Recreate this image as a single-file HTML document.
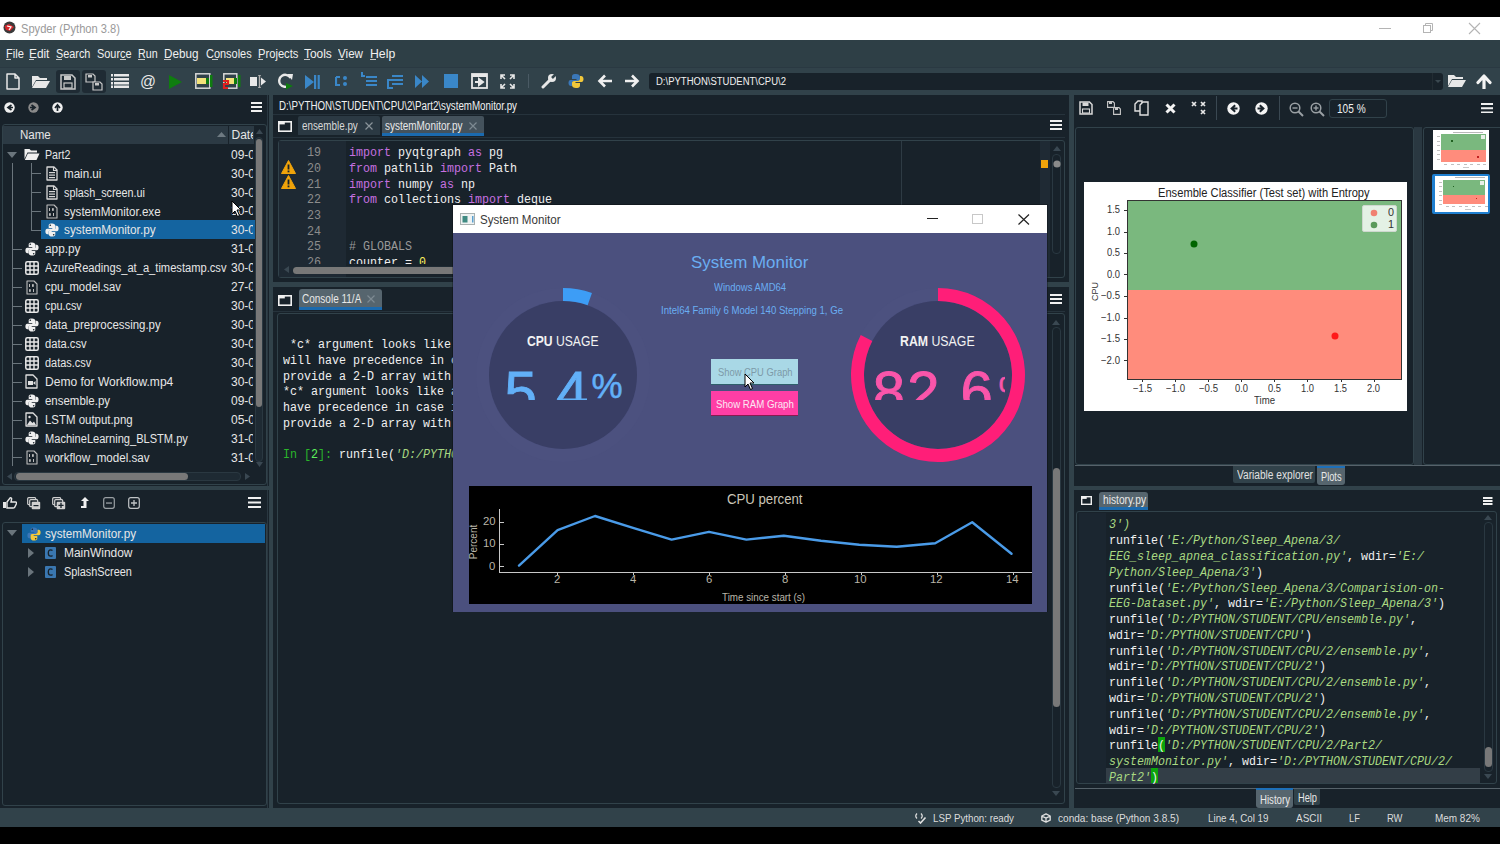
<!DOCTYPE html>
<html><head><meta charset="utf-8">
<style>
*{margin:0;padding:0;box-sizing:border-box}
html,body{width:1500px;height:844px;overflow:hidden;background:#000;font-family:"Liberation Sans",sans-serif;position:relative}
.a{position:absolute;display:block}
.t{position:absolute;white-space:pre;line-height:1}
.fr{border:1px solid #31424A;border-radius:3px}
</style></head><body>
<div class="a" style="left:0px;top:17px;width:1500px;height:23px;background:#fff;"></div>
<div class="a" style="left:0px;top:40px;width:1500px;height:28px;background:#2E3F46;"></div>
<div class="a" style="left:0px;top:67px;width:1500px;height:1px;background:#2A3942;"></div>
<div class="a" style="left:0px;top:68px;width:1500px;height:27px;background:#31424A;"></div>
<div class="a" style="left:0px;top:95px;width:1500px;height:713px;background:#18222A;"></div>
<div class="a" style="left:0px;top:808px;width:1500px;height:19px;background:#31424A;"></div>
<svg class="a" style="left:3px;top:21px;" width="13" height="13" viewBox="0 0 13 13"><circle cx="6.5" cy="6.5" r="6" fill="#3a3a3a"/><path d="M1.5 5 L6 3 L11 6 L7 10 L3 9 Z" fill="#d8262b"/><path d="M4 5 L8 6 L6 9" stroke="#fff" stroke-width="1.2" fill="none"/></svg>
<span class="t" style="left:21.00px;top:22.72px;font-size:12px;color:#9a9a9a;font-family:'Liberation Sans',sans-serif;transform:scaleX(0.9275);transform-origin:0 0;">Spyder (Python 3.8)</span>
<div class="a" style="left:1379px;top:28px;width:12px;height:1px;background:#b4b4b4;"></div>
<svg class="a" style="left:1422px;top:22px;" width="12" height="12" viewBox="0 0 12 12"><rect x="1.5" y="3.5" width="7" height="7" fill="none" stroke="#b4b4b4"/><path d="M3.5 3.5 V1.5 H10.5 V8.5 H8.5" fill="none" stroke="#b4b4b4"/></svg>
<svg class="a" style="left:1468px;top:22px;" width="13" height="13" viewBox="0 0 13 13"><path d="M1 1 L12 12 M12 1 L1 12" stroke="#b4b4b4" stroke-width="1.1"/></svg>
<span class="t" style="left:5.60px;top:48.22px;font-size:12px;color:#F0F0F0;font-family:'Liberation Sans',sans-serif;transform:scaleX(0.9254);transform-origin:0 0;">File</span>
<span class="t" style="left:29.40px;top:48.22px;font-size:12px;color:#F0F0F0;font-family:'Liberation Sans',sans-serif;transform:scaleX(0.9861);transform-origin:0 0;">Edit</span>
<span class="t" style="left:56.00px;top:48.22px;font-size:12px;color:#F0F0F0;font-family:'Liberation Sans',sans-serif;transform:scaleX(0.9045);transform-origin:0 0;">Search</span>
<span class="t" style="left:97.00px;top:48.22px;font-size:12px;color:#F0F0F0;font-family:'Liberation Sans',sans-serif;transform:scaleX(0.9098);transform-origin:0 0;">Source</span>
<span class="t" style="left:138.00px;top:48.22px;font-size:12px;color:#F0F0F0;font-family:'Liberation Sans',sans-serif;transform:scaleX(0.8903);transform-origin:0 0;">Run</span>
<span class="t" style="left:164.40px;top:48.22px;font-size:12px;color:#F0F0F0;font-family:'Liberation Sans',sans-serif;transform:scaleX(0.9724);transform-origin:0 0;">Debug</span>
<span class="t" style="left:205.80px;top:48.22px;font-size:12px;color:#F0F0F0;font-family:'Liberation Sans',sans-serif;transform:scaleX(0.9134);transform-origin:0 0;">Consoles</span>
<span class="t" style="left:257.60px;top:48.22px;font-size:12px;color:#F0F0F0;font-family:'Liberation Sans',sans-serif;transform:scaleX(0.9317);transform-origin:0 0;">Projects</span>
<span class="t" style="left:304.00px;top:48.22px;font-size:12px;color:#F0F0F0;font-family:'Liberation Sans',sans-serif;transform:scaleX(0.9923);transform-origin:0 0;">Tools</span>
<span class="t" style="left:338.00px;top:48.22px;font-size:12px;color:#F0F0F0;font-family:'Liberation Sans',sans-serif;transform:scaleX(0.9691);transform-origin:0 0;">View</span>
<span class="t" style="left:369.60px;top:48.22px;font-size:12px;color:#F0F0F0;font-family:'Liberation Sans',sans-serif;transform:scaleX(1.0208);transform-origin:0 0;">Help</span>
<div class="a" style="left:6px;top:59px;width:5px;height:1px;background:#c8c8c8;"></div>
<div class="a" style="left:29px;top:59px;width:5px;height:1px;background:#c8c8c8;"></div>
<div class="a" style="left:56px;top:59px;width:6px;height:1px;background:#c8c8c8;"></div>
<div class="a" style="left:120px;top:59px;width:6px;height:1px;background:#c8c8c8;"></div>
<div class="a" style="left:138px;top:59px;width:7px;height:1px;background:#c8c8c8;"></div>
<div class="a" style="left:164px;top:59px;width:7px;height:1px;background:#c8c8c8;"></div>
<div class="a" style="left:212px;top:59px;width:6px;height:1px;background:#c8c8c8;"></div>
<div class="a" style="left:258px;top:59px;width:5px;height:1px;background:#c8c8c8;"></div>
<div class="a" style="left:304px;top:59px;width:6px;height:1px;background:#c8c8c8;"></div>
<div class="a" style="left:338px;top:59px;width:6px;height:1px;background:#c8c8c8;"></div>
<div class="a" style="left:370px;top:59px;width:6px;height:1px;background:#c8c8c8;"></div>
<div class="a" style="left:56px;top:70px;width:24px;height:23px;background:#1f2b34;border-radius:3px"></div>
<div class="a" style="left:82px;top:70px;width:24px;height:23px;background:#1f2b34;border-radius:3px"></div>
<svg class="a" style="left:6px;top:73px;" width="14" height="17" viewBox="0 0 14 17"><path d="M1 1 H9 L13 5 V16 H1 Z M9 1 V5 H13" fill="none" stroke="#e8e8e8" stroke-width="1.5" stroke-linejoin="round"/></svg>
<svg class="a" style="left:31px;top:74px;" width="20" height="15" viewBox="0 0 20 15"><path d="M1 2 H7 L9 4 H16 V6 H5 L1 13 Z" fill="#e8e8e8"/><path d="M5 7 H19 L15 14 H1 Z" fill="#e8e8e8"/></svg>
<svg class="a" style="left:60px;top:74px;" width="16" height="16" viewBox="0 0 16 16"><path d="M1 1 H12 L15 4 V15 H1 Z" fill="none" stroke="#c8c8c8" stroke-width="1.5"/><rect x="4" y="2" width="7" height="4" fill="#c8c8c8"/><rect x="4" y="9" width="8" height="5" fill="none" stroke="#c8c8c8" stroke-width="1.2"/></svg>
<svg class="a" style="left:85px;top:73px;" width="19" height="19" viewBox="0 0 19 19"><path d="M1 1 H8 L10 3 V9 H1 Z" fill="none" stroke="#c8c8c8" stroke-width="1.2"/><rect x="3" y="2" width="4" height="2.5" fill="#c8c8c8"/><path d="M8 9 H15 L17 11 V17 H8 Z" fill="#1f2b34" stroke="#c8c8c8" stroke-width="1.2"/><rect x="10" y="10" width="4" height="2.5" fill="#c8c8c8"/></svg>
<svg class="a" style="left:111px;top:74px;" width="18" height="14" viewBox="0 0 18 14"><g fill="#e8e8e8"><rect x="0" y="0" width="2" height="2.5"/><rect x="3" y="0" width="15" height="2.5"/><rect x="0" y="4" width="2" height="2.5"/><rect x="3" y="4" width="15" height="2.5"/><rect x="0" y="8" width="2" height="2.5"/><rect x="3" y="8" width="15" height="2.5"/><rect x="0" y="11.5" width="2" height="2.5"/><rect x="3" y="11.5" width="15" height="2.5"/></g></svg>
<span class="t" style="left:139.50px;top:72.81px;font-size:17px;color:#e8e8e8;font-family:'Liberation Sans',sans-serif;transform:scaleX(0.9267);transform-origin:0 0;">@</span>
<svg class="a" style="left:169px;top:75px;" width="13" height="14" viewBox="0 0 13 14"><path d="M0 0 L13 7 L0 14 Z" fill="#0f7d0f"/></svg>
<svg class="a" style="left:195px;top:73px;" width="19" height="16" viewBox="0 0 19 16"><rect x="0.8" y="0.8" width="14" height="14.4" fill="none" stroke="#d8d8d8" stroke-width="1.5"/><rect x="2" y="5" width="9" height="6" fill="#f4e27a"/><rect x="11" y="5" width="3" height="6" fill="#0f7d0f"/><rect x="15" y="2" width="2.5" height="12" fill="#0f7d0f"/></svg>
<svg class="a" style="left:222px;top:73px;" width="19" height="17" viewBox="0 0 19 17"><rect x="1.8" y="0.8" width="13" height="14.4" fill="none" stroke="#d8d8d8" stroke-width="1.5"/><rect x="4" y="5" width="8" height="6" fill="#f4e27a"/><rect x="12" y="5" width="3" height="6" fill="#0f7d0f"/><rect x="16" y="2" width="2.5" height="12" fill="#0f7d0f"/><path d="M1 8 H6 V11 H2 V15 H6" fill="none" stroke="#e02020" stroke-width="2.2"/></svg>
<svg class="a" style="left:249px;top:75px;" width="18" height="13" viewBox="0 0 18 13"><rect x="1" y="2" width="7" height="9" fill="#e8e8e8"/><path d="M9 0 H12 M10.5 0 V13 M9 13 H12" stroke="#b0b0b0" stroke-width="1.4"/><path d="M12 2.5 L17 6.5 L12 10.5 Z" fill="#e8e8e8"/></svg>
<svg class="a" style="left:278px;top:73px;" width="16" height="17" viewBox="0 0 16 17"><path d="M12.5 5 A6 6 0 1 0 11 12.5" fill="none" stroke="#e8e8e8" stroke-width="2.4"/><path d="M9 1 L15 1 L14 7 Z" fill="#e8e8e8"/><path d="M8 10 L15 13 L8 16.5 Z" fill="#0f7d0f"/></svg>
<svg class="a" style="left:305px;top:75px;" width="15" height="14" viewBox="0 0 15 14"><path d="M0 0 L9 7 L0 14 Z" fill="#3a87c8"/><rect x="9" y="0" width="2.2" height="14" fill="#3a87c8"/><rect x="12.6" y="0" width="2.2" height="14" fill="#3a87c8"/></svg>
<svg class="a" style="left:335px;top:75px;" width="13" height="12" viewBox="0 0 13 12"><path d="M1 2 H5 M1 2 V10 H5" stroke="#3a87c8" stroke-width="2.2" fill="none"/><circle cx="10" cy="3" r="2" fill="#3a87c8"/><circle cx="10" cy="9" r="2" fill="#3a87c8"/></svg>
<svg class="a" style="left:361px;top:72px;" width="16" height="15" viewBox="0 0 16 15"><path d="M1 0 V4 H4" stroke="#3a87c8" stroke-width="2" fill="none"/><g fill="#3a87c8"><rect x="5" y="4" width="11" height="2"/><rect x="5" y="8" width="11" height="2"/><rect x="5" y="12" width="11" height="2"/></g></svg>
<svg class="a" style="left:387px;top:74px;" width="17" height="16" viewBox="0 0 17 16"><g fill="#3a87c8"><rect x="5" y="1" width="11" height="2"/><rect x="5" y="5" width="11" height="2"/><rect x="5" y="9" width="11" height="2"/></g><path d="M9 6 H1 V14 H6" stroke="#3a87c8" stroke-width="2" fill="none"/></svg>
<svg class="a" style="left:415px;top:75px;" width="16" height="13" viewBox="0 0 16 13"><path d="M0 0 L7 6.5 L0 13 Z M7 0 L14 6.5 L7 13 Z" fill="#3a87c8"/></svg>
<div class="a" style="left:444px;top:74px;width:14px;height:14px;background:#3a87c8;"></div>
<svg class="a" style="left:471px;top:73px;" width="17" height="16" viewBox="0 0 17 16"><rect x="1" y="1" width="15" height="14" fill="none" stroke="#e8e8e8" stroke-width="1.8"/><rect x="1" y="1" width="15" height="3" fill="#e8e8e8"/><path d="M4 9 H9 M8 6 L12 9 L8 12 Z" stroke="#e8e8e8" stroke-width="2" fill="#e8e8e8"/></svg>
<svg class="a" style="left:500px;top:74px;" width="15" height="15" viewBox="0 0 15 15"><g stroke="#e8e8e8" stroke-width="1.6" fill="none"><path d="M1 5 V1 H5 M1 1 L5 5"/><path d="M10 1 H14 V5 M14 1 L10 5"/><path d="M1 10 V14 H5 M1 14 L5 10"/><path d="M14 10 V14 H10 M14 14 L10 10"/></g></svg>
<div class="a" style="left:528px;top:74px;width:1px;height:14px;background:#4a5a64;"></div>
<svg class="a" style="left:541px;top:73px;" width="16" height="16" viewBox="0 0 16 16"><path d="M2 14 L9 7" stroke="#e8e8e8" stroke-width="3" stroke-linecap="round"/><circle cx="11" cy="5" r="4" fill="#e8e8e8"/><path d="M11 5 L15 1" stroke="#31424A" stroke-width="2.5"/></svg>
<svg class="a" style="left:568px;top:73px;" width="16" height="16" viewBox="0 0 16 16"><path d="M8 1 C4 1 4 2.5 4 4 V6 H8.5 V7 H2.5 C1 7 0.5 8.5 0.5 10 C0.5 12 1.5 13 3 13 H4 V10.5 C4 9 5 8 6.5 8 H10 C11.5 8 12 7 12 6 V4 C12 2 10.5 1 8 1 Z" fill="#3a77b8"/><path d="M8 15 C12 15 12 13.5 12 12 V10 H7.5 V9 H13.5 C15 9 15.5 7.5 15.5 6 C15.5 4 14.5 3 13 3 H12 V5.5 C12 7 11 8 9.5 8 H6 C4.5 8 4 9 4 10 V12 C4 14 5.5 15 8 15 Z" fill="#f2c83a"/></svg>
<svg class="a" style="left:597px;top:74px;" width="16" height="14" viewBox="0 0 16 14"><path d="M15 7 H3 M8 1.5 L2.5 7 L8 12.5" stroke="#f0f0f0" stroke-width="2.6" fill="none"/></svg>
<svg class="a" style="left:624px;top:74px;" width="16" height="14" viewBox="0 0 16 14"><path d="M1 7 H13 M8 1.5 L13.5 7 L8 12.5" stroke="#f0f0f0" stroke-width="2.6" fill="none"/></svg>
<div class="a" style="left:649px;top:73px;width:794px;height:17px;background:#18222A;border-radius:3px"></div>
<span class="t" style="left:656.00px;top:76.68px;font-size:10px;color:#F0F0F0;font-family:'Liberation Sans',sans-serif;transform:scaleX(0.9511);transform-origin:0 0;">D:\PYTHON\STUDENT\CPU\2</span>
<div class="a" style="left:1432px;top:73px;width:1px;height:17px;background:#222C33;"></div>
<svg class="a" style="left:1435px;top:80px;" width="6" height="3" viewBox="0 0 6 3"><path d="M0 0 L6 0 L3 3 Z" fill="#3a4850"/></svg>
<svg class="a" style="left:1447px;top:73px;" width="19" height="15" viewBox="0 0 19 15"><path d="M1 2 H7 L9 4 H16 V6 H5 L1 13 Z" fill="#e8e8e8"/><path d="M5 7 H19 L15 14 H1 Z" fill="#e8e8e8"/></svg>
<svg class="a" style="left:1476px;top:73px;" width="16" height="16" viewBox="0 0 16 16"><path d="M8 15.5 V4 M2 9.5 L8 3 L14 9.5" stroke="#f4f4f4" stroke-width="3.2" fill="none" stroke-linecap="round" stroke-linejoin="round"/></svg>
<svg class="a" style="left:4.0px;top:101.5px;" width="11" height="11" viewBox="0 0 11 11"><circle cx="5.5" cy="5.5" r="5.2" fill="#f0f0f0"/><path d="M7.5 3 L4 5.5 L7.5 8 M4 5.5 H9" stroke="#18222A" stroke-width="1.7" fill="none"/></svg>
<svg class="a" style="left:28.0px;top:101.5px;" width="11" height="11" viewBox="0 0 11 11"><circle cx="5.5" cy="5.5" r="5.2" fill="#8a8a8a"/><path d="M3.5 3 L7 5.5 L3.5 8 M2 5.5 H7" stroke="#18222A" stroke-width="1.7" fill="none"/></svg>
<svg class="a" style="left:52.0px;top:101.5px;" width="11" height="11" viewBox="0 0 11 11"><circle cx="5.5" cy="5.5" r="5.2" fill="#f0f0f0"/><path d="M3 6 L5.5 2.8 L8 6 M5.5 3 V9" stroke="#18222A" stroke-width="1.7" fill="none"/></svg>
<svg class="a" style="left:251px;top:102px;" width="11" height="10" viewBox="0 0 11 10"><g fill="#f0f0f0"><rect x="0" y="0" width="11" height="2"/><rect x="0" y="4.0" width="11" height="2"/><rect x="0" y="8" width="11" height="2"/></g></svg>
<div class="a fr" style="left:2px;top:124px;width:265px;height:361px"></div>
<div class="a" style="left:3px;top:126px;width:225px;height:18px;background:#2C3A44;"></div>
<div class="a" style="left:229px;top:126px;width:25px;height:18px;background:#2C3A44;"></div>
<span class="t" style="left:20.40px;top:129.22px;font-size:12px;color:#E6E6E6;font-family:'Liberation Sans',sans-serif;transform:scaleX(0.9620);transform-origin:0 0;">Name</span>
<svg class="a" style="left:217px;top:132px;" width="9" height="5" viewBox="0 0 9 5"><path d="M0 5 L4.5 0 L9 5 Z" fill="#6e7a82"/></svg>
<div class="a" style="left:229px;top:126px;width:24px;height:18px;overflow:hidden"><span class="t" style="left:2.5px;top:3.2px;font-size:12px;color:#E6E6E6">Date</span></div>
<svg class="a" style="left:256px;top:129px;" width="7" height="5" viewBox="0 0 7 5"><path d="M0 5 L3.5 0 L7 5 Z" fill="#3a4852"/></svg>
<div class="a" style="left:255px;top:137px;width:8px;height:325px;background:#1e2a33;border-radius:4px;border:1px solid #2a3841"></div>
<div class="a" style="left:256px;top:139px;width:6px;height:268px;background:#787878;border-radius:3px"></div>
<svg class="a" style="left:256px;top:462px;" width="7" height="5" viewBox="0 0 7 5"><path d="M0 0 L3.5 5 L7 0 Z" fill="#3a4852"/></svg>
<div class="a" style="left:41px;top:220px;width:214px;height:19px;background:#1464A0;"></div>
<div class="a" style="left:12px;top:163px;width:1px;height:303px;background:#6a757c;"></div>
<div class="a" style="left:31px;top:163px;width:1px;height:68px;background:#6a757c;"></div>
<svg class="a" style="left:24px;top:148.0px;" width="16" height="13" viewBox="0 0 16 13"><path d="M0.5 1 H5.5 L7 2.5 H13 V4.5 H3.5 L0.5 11 Z" fill="#f0f0f0"/><path d="M3.8 5.5 H15.5 L12.5 12 H0.8 Z" fill="#f0f0f0"/></svg>
<span class="t" style="left:44.50px;top:148.72px;font-size:12px;color:#E6E6E6;font-family:'Liberation Sans',sans-serif;transform:scaleX(0.8854);transform-origin:0 0;">Part2</span>
<div class="a" style="left:229px;top:146.5px;width:24px;height:16px;overflow:hidden"><span class="t" style="left:2px;top:2.2px;font-size:12px;color:#E6E6E6">09-0</span></div>
<div class="a" style="left:31px;top:173px;width:10px;height:1px;background:#6a757c;"></div>
<svg class="a" style="left:46px;top:165.93px;" width="12" height="15" viewBox="0 0 12 15"><path d="M1 1 H8 L11 4 V14 H1 Z" fill="none" stroke="#d8d8d8" stroke-width="1.3" stroke-linejoin="round"/><path d="M7.5 1 V4.5 H11" fill="none" stroke="#d8d8d8" stroke-width="1.1"/><g fill="#d8d8d8"><rect x="3" y="6" width="6" height="1.2"/><rect x="3" y="8.5" width="6" height="1.2"/><rect x="3" y="11" width="6" height="1.2"/></g></svg>
<span class="t" style="left:64.00px;top:167.65px;font-size:12px;color:#E6E6E6;font-family:'Liberation Sans',sans-serif;transform:scaleX(0.9667);transform-origin:0 0;">main.ui</span>
<div class="a" style="left:229px;top:165.4px;width:24px;height:16px;overflow:hidden"><span class="t" style="left:2px;top:2.2px;font-size:12px;color:#E6E6E6">30-0</span></div>
<div class="a" style="left:31px;top:192px;width:10px;height:1px;background:#6a757c;"></div>
<svg class="a" style="left:46px;top:184.86px;" width="12" height="15" viewBox="0 0 12 15"><path d="M1 1 H8 L11 4 V14 H1 Z" fill="none" stroke="#d8d8d8" stroke-width="1.3" stroke-linejoin="round"/><path d="M7.5 1 V4.5 H11" fill="none" stroke="#d8d8d8" stroke-width="1.1"/><g fill="#d8d8d8"><rect x="3" y="6" width="6" height="1.2"/><rect x="3" y="8.5" width="6" height="1.2"/><rect x="3" y="11" width="6" height="1.2"/></g></svg>
<span class="t" style="left:64.00px;top:186.58px;font-size:12px;color:#E6E6E6;font-family:'Liberation Sans',sans-serif;transform:scaleX(0.8994);transform-origin:0 0;">splash_screen.ui</span>
<div class="a" style="left:229px;top:184.4px;width:24px;height:16px;overflow:hidden"><span class="t" style="left:2px;top:2.2px;font-size:12px;color:#E6E6E6">30-0</span></div>
<div class="a" style="left:31px;top:211px;width:10px;height:1px;background:#6a757c;"></div>
<svg class="a" style="left:46px;top:203.79px;" width="12" height="15" viewBox="0 0 12 15"><path d="M1 1 H8 L11 4 V14 H1 Z" fill="none" stroke="#bdbdbd" stroke-width="1.1" stroke-linejoin="round"/><g fill="#bdbdbd"><rect x="3" y="4" width="1" height="3"/><rect x="6" y="4" width="1.8" height="3" rx="0.8"/><rect x="3" y="9" width="1.8" height="3" rx="0.8"/><rect x="7" y="9" width="1" height="3"/></g></svg>
<span class="t" style="left:64.00px;top:205.51px;font-size:12px;color:#E6E6E6;font-family:'Liberation Sans',sans-serif;transform:scaleX(0.9655);transform-origin:0 0;">systemMonitor.exe</span>
<div class="a" style="left:229px;top:203.3px;width:24px;height:16px;overflow:hidden"><span class="t" style="left:2px;top:2.2px;font-size:12px;color:#E6E6E6">30-0</span></div>
<div class="a" style="left:31px;top:230px;width:10px;height:1px;background:#6a757c;"></div>
<svg class="a" style="left:45px;top:223.22px;" width="14" height="14" viewBox="0 0 14 14"><path d="M7 0.5 C3.5 0.5 3.7 2 3.7 3.3 V5 H7.3 V5.8 H2.2 C1 5.8 0.4 7 0.4 8.6 C0.4 10.4 1.2 11.2 2.3 11.2 H3.6 V9.3 C3.6 8 4.5 7.1 5.7 7.1 H9 C10.1 7.1 10.4 6.3 10.4 5.4 V3.1 C10.4 1.6 9.2 0.5 7 0.5 Z" fill="#f0f0f0"/><path d="M7 13.5 C10.5 13.5 10.3 12 10.3 10.7 V9 H6.7 V8.2 H11.8 C13 8.2 13.6 7 13.6 5.4 C13.6 3.6 12.8 2.8 11.7 2.8 H10.6 V4.7 C10.6 6 9.7 6.9 8.5 6.9 H5 C3.9 6.9 3.6 7.7 3.6 8.6 V10.9 C3.6 12.4 4.8 13.5 7 13.5 Z" fill="#f0f0f0"/><circle cx="5.3" cy="2.3" r="0.8" fill="#18222A"/><circle cx="8.7" cy="11.7" r="0.8" fill="#18222A"/></svg>
<span class="t" style="left:64.00px;top:224.44px;font-size:12px;color:#E6E6E6;font-family:'Liberation Sans',sans-serif;transform:scaleX(0.9810);transform-origin:0 0;">systemMonitor.py</span>
<div class="a" style="left:229px;top:222.2px;width:24px;height:16px;overflow:hidden"><span class="t" style="left:2px;top:2.2px;font-size:12px;color:#E6E6E6">30-0</span></div>
<div class="a" style="left:12px;top:249px;width:10px;height:1px;background:#6a757c;"></div>
<svg class="a" style="left:25px;top:242.15px;" width="14" height="14" viewBox="0 0 14 14"><path d="M7 0.5 C3.5 0.5 3.7 2 3.7 3.3 V5 H7.3 V5.8 H2.2 C1 5.8 0.4 7 0.4 8.6 C0.4 10.4 1.2 11.2 2.3 11.2 H3.6 V9.3 C3.6 8 4.5 7.1 5.7 7.1 H9 C10.1 7.1 10.4 6.3 10.4 5.4 V3.1 C10.4 1.6 9.2 0.5 7 0.5 Z" fill="#f0f0f0"/><path d="M7 13.5 C10.5 13.5 10.3 12 10.3 10.7 V9 H6.7 V8.2 H11.8 C13 8.2 13.6 7 13.6 5.4 C13.6 3.6 12.8 2.8 11.7 2.8 H10.6 V4.7 C10.6 6 9.7 6.9 8.5 6.9 H5 C3.9 6.9 3.6 7.7 3.6 8.6 V10.9 C3.6 12.4 4.8 13.5 7 13.5 Z" fill="#f0f0f0"/><circle cx="5.3" cy="2.3" r="0.8" fill="#18222A"/><circle cx="8.7" cy="11.7" r="0.8" fill="#18222A"/></svg>
<span class="t" style="left:44.50px;top:243.37px;font-size:12px;color:#E6E6E6;font-family:'Liberation Sans',sans-serif;transform:scaleX(0.9853);transform-origin:0 0;">app.py</span>
<div class="a" style="left:229px;top:241.2px;width:24px;height:16px;overflow:hidden"><span class="t" style="left:2px;top:2.2px;font-size:12px;color:#E6E6E6">31-0</span></div>
<div class="a" style="left:12px;top:268px;width:10px;height:1px;background:#6a757c;"></div>
<svg class="a" style="left:25px;top:261.08px;" width="14" height="14" viewBox="0 0 14 14"><rect x="0.8" y="0.8" width="12.4" height="12.4" rx="1.5" fill="none" stroke="#e8e8e8" stroke-width="1.5"/><path d="M5 1 V13 M9 1 V13 M1 5 H13 M1 9 H13" stroke="#e8e8e8" stroke-width="1.4"/></svg>
<span class="t" style="left:44.50px;top:262.30px;font-size:12px;color:#E6E6E6;font-family:'Liberation Sans',sans-serif;transform:scaleX(0.9287);transform-origin:0 0;">AzureReadings_at_a_timestamp.csv</span>
<div class="a" style="left:229px;top:260.1px;width:24px;height:16px;overflow:hidden"><span class="t" style="left:2px;top:2.2px;font-size:12px;color:#E6E6E6">30-0</span></div>
<div class="a" style="left:12px;top:287px;width:10px;height:1px;background:#6a757c;"></div>
<svg class="a" style="left:26px;top:279.51px;" width="12" height="15" viewBox="0 0 12 15"><path d="M1 1 H8 L11 4 V14 H1 Z" fill="none" stroke="#bdbdbd" stroke-width="1.1" stroke-linejoin="round"/><g fill="#bdbdbd"><rect x="3" y="4" width="1" height="3"/><rect x="6" y="4" width="1.8" height="3" rx="0.8"/><rect x="3" y="9" width="1.8" height="3" rx="0.8"/><rect x="7" y="9" width="1" height="3"/></g></svg>
<span class="t" style="left:44.50px;top:281.23px;font-size:12px;color:#E6E6E6;font-family:'Liberation Sans',sans-serif;transform:scaleX(0.9403);transform-origin:0 0;">cpu_model.sav</span>
<div class="a" style="left:229px;top:279.0px;width:24px;height:16px;overflow:hidden"><span class="t" style="left:2px;top:2.2px;font-size:12px;color:#E6E6E6">27-0</span></div>
<div class="a" style="left:12px;top:306px;width:10px;height:1px;background:#6a757c;"></div>
<svg class="a" style="left:25px;top:298.94px;" width="14" height="14" viewBox="0 0 14 14"><rect x="0.8" y="0.8" width="12.4" height="12.4" rx="1.5" fill="none" stroke="#e8e8e8" stroke-width="1.5"/><path d="M5 1 V13 M9 1 V13 M1 5 H13 M1 9 H13" stroke="#e8e8e8" stroke-width="1.4"/></svg>
<span class="t" style="left:44.50px;top:300.16px;font-size:12px;color:#E6E6E6;font-family:'Liberation Sans',sans-serif;transform:scaleX(0.9045);transform-origin:0 0;">cpu.csv</span>
<div class="a" style="left:229px;top:297.9px;width:24px;height:16px;overflow:hidden"><span class="t" style="left:2px;top:2.2px;font-size:12px;color:#E6E6E6">30-0</span></div>
<div class="a" style="left:12px;top:325px;width:10px;height:1px;background:#6a757c;"></div>
<svg class="a" style="left:25px;top:317.87px;" width="14" height="14" viewBox="0 0 14 14"><path d="M7 0.5 C3.5 0.5 3.7 2 3.7 3.3 V5 H7.3 V5.8 H2.2 C1 5.8 0.4 7 0.4 8.6 C0.4 10.4 1.2 11.2 2.3 11.2 H3.6 V9.3 C3.6 8 4.5 7.1 5.7 7.1 H9 C10.1 7.1 10.4 6.3 10.4 5.4 V3.1 C10.4 1.6 9.2 0.5 7 0.5 Z" fill="#f0f0f0"/><path d="M7 13.5 C10.5 13.5 10.3 12 10.3 10.7 V9 H6.7 V8.2 H11.8 C13 8.2 13.6 7 13.6 5.4 C13.6 3.6 12.8 2.8 11.7 2.8 H10.6 V4.7 C10.6 6 9.7 6.9 8.5 6.9 H5 C3.9 6.9 3.6 7.7 3.6 8.6 V10.9 C3.6 12.4 4.8 13.5 7 13.5 Z" fill="#f0f0f0"/><circle cx="5.3" cy="2.3" r="0.8" fill="#18222A"/><circle cx="8.7" cy="11.7" r="0.8" fill="#18222A"/></svg>
<span class="t" style="left:44.50px;top:319.09px;font-size:12px;color:#E6E6E6;font-family:'Liberation Sans',sans-serif;transform:scaleX(0.9529);transform-origin:0 0;">data_preprocessing.py</span>
<div class="a" style="left:229px;top:316.9px;width:24px;height:16px;overflow:hidden"><span class="t" style="left:2px;top:2.2px;font-size:12px;color:#E6E6E6">30-0</span></div>
<div class="a" style="left:12px;top:344px;width:10px;height:1px;background:#6a757c;"></div>
<svg class="a" style="left:25px;top:336.8px;" width="14" height="14" viewBox="0 0 14 14"><rect x="0.8" y="0.8" width="12.4" height="12.4" rx="1.5" fill="none" stroke="#e8e8e8" stroke-width="1.5"/><path d="M5 1 V13 M9 1 V13 M1 5 H13 M1 9 H13" stroke="#e8e8e8" stroke-width="1.4"/></svg>
<span class="t" style="left:44.50px;top:338.02px;font-size:12px;color:#E6E6E6;font-family:'Liberation Sans',sans-serif;transform:scaleX(0.9306);transform-origin:0 0;">data.csv</span>
<div class="a" style="left:229px;top:335.8px;width:24px;height:16px;overflow:hidden"><span class="t" style="left:2px;top:2.2px;font-size:12px;color:#E6E6E6">30-0</span></div>
<div class="a" style="left:12px;top:363px;width:10px;height:1px;background:#6a757c;"></div>
<svg class="a" style="left:25px;top:355.73px;" width="14" height="14" viewBox="0 0 14 14"><rect x="0.8" y="0.8" width="12.4" height="12.4" rx="1.5" fill="none" stroke="#e8e8e8" stroke-width="1.5"/><path d="M5 1 V13 M9 1 V13 M1 5 H13 M1 9 H13" stroke="#e8e8e8" stroke-width="1.4"/></svg>
<span class="t" style="left:44.50px;top:356.95px;font-size:12px;color:#E6E6E6;font-family:'Liberation Sans',sans-serif;transform:scaleX(0.9092);transform-origin:0 0;">datas.csv</span>
<div class="a" style="left:229px;top:354.7px;width:24px;height:16px;overflow:hidden"><span class="t" style="left:2px;top:2.2px;font-size:12px;color:#E6E6E6">30-0</span></div>
<div class="a" style="left:12px;top:382px;width:10px;height:1px;background:#6a757c;"></div>
<svg class="a" style="left:25px;top:374.15999999999997px;" width="13" height="15" viewBox="0 0 13 15"><path d="M1 1 H8 L12 5 V14 H1 Z" fill="none" stroke="#e0e0e0" stroke-width="1.3" stroke-linejoin="round"/><rect x="3" y="7" width="5" height="4" fill="#e0e0e0"/><path d="M8 9 L10.5 7 V11 Z" fill="#e0e0e0"/></svg>
<span class="t" style="left:44.50px;top:375.88px;font-size:12px;color:#E6E6E6;font-family:'Liberation Sans',sans-serif;transform:scaleX(1.0037);transform-origin:0 0;">Demo for Workflow.mp4</span>
<div class="a" style="left:229px;top:373.7px;width:24px;height:16px;overflow:hidden"><span class="t" style="left:2px;top:2.2px;font-size:12px;color:#E6E6E6">30-0</span></div>
<div class="a" style="left:12px;top:401px;width:10px;height:1px;background:#6a757c;"></div>
<svg class="a" style="left:25px;top:393.59000000000003px;" width="14" height="14" viewBox="0 0 14 14"><path d="M7 0.5 C3.5 0.5 3.7 2 3.7 3.3 V5 H7.3 V5.8 H2.2 C1 5.8 0.4 7 0.4 8.6 C0.4 10.4 1.2 11.2 2.3 11.2 H3.6 V9.3 C3.6 8 4.5 7.1 5.7 7.1 H9 C10.1 7.1 10.4 6.3 10.4 5.4 V3.1 C10.4 1.6 9.2 0.5 7 0.5 Z" fill="#f0f0f0"/><path d="M7 13.5 C10.5 13.5 10.3 12 10.3 10.7 V9 H6.7 V8.2 H11.8 C13 8.2 13.6 7 13.6 5.4 C13.6 3.6 12.8 2.8 11.7 2.8 H10.6 V4.7 C10.6 6 9.7 6.9 8.5 6.9 H5 C3.9 6.9 3.6 7.7 3.6 8.6 V10.9 C3.6 12.4 4.8 13.5 7 13.5 Z" fill="#f0f0f0"/><circle cx="5.3" cy="2.3" r="0.8" fill="#18222A"/><circle cx="8.7" cy="11.7" r="0.8" fill="#18222A"/></svg>
<span class="t" style="left:44.50px;top:394.81px;font-size:12px;color:#E6E6E6;font-family:'Liberation Sans',sans-serif;transform:scaleX(0.9552);transform-origin:0 0;">ensemble.py</span>
<div class="a" style="left:229px;top:392.6px;width:24px;height:16px;overflow:hidden"><span class="t" style="left:2px;top:2.2px;font-size:12px;color:#E6E6E6">09-0</span></div>
<div class="a" style="left:12px;top:420px;width:10px;height:1px;background:#6a757c;"></div>
<svg class="a" style="left:25px;top:412.02px;" width="13" height="15" viewBox="0 0 13 15"><path d="M1 1 H8 L12 5 V14 H1 Z" fill="none" stroke="#e0e0e0" stroke-width="1.3" stroke-linejoin="round"/><path d="M2 13 L5 8.5 L7.5 11 L9 9.5 L11 13 Z" fill="#e0e0e0"/><circle cx="4.5" cy="5" r="1.2" fill="#e0e0e0"/></svg>
<span class="t" style="left:44.50px;top:413.74px;font-size:12px;color:#E6E6E6;font-family:'Liberation Sans',sans-serif;transform:scaleX(0.9526);transform-origin:0 0;">LSTM output.png</span>
<div class="a" style="left:229px;top:411.5px;width:24px;height:16px;overflow:hidden"><span class="t" style="left:2px;top:2.2px;font-size:12px;color:#E6E6E6">05-0</span></div>
<div class="a" style="left:12px;top:438px;width:10px;height:1px;background:#6a757c;"></div>
<svg class="a" style="left:25px;top:431.45px;" width="14" height="14" viewBox="0 0 14 14"><path d="M7 0.5 C3.5 0.5 3.7 2 3.7 3.3 V5 H7.3 V5.8 H2.2 C1 5.8 0.4 7 0.4 8.6 C0.4 10.4 1.2 11.2 2.3 11.2 H3.6 V9.3 C3.6 8 4.5 7.1 5.7 7.1 H9 C10.1 7.1 10.4 6.3 10.4 5.4 V3.1 C10.4 1.6 9.2 0.5 7 0.5 Z" fill="#f0f0f0"/><path d="M7 13.5 C10.5 13.5 10.3 12 10.3 10.7 V9 H6.7 V8.2 H11.8 C13 8.2 13.6 7 13.6 5.4 C13.6 3.6 12.8 2.8 11.7 2.8 H10.6 V4.7 C10.6 6 9.7 6.9 8.5 6.9 H5 C3.9 6.9 3.6 7.7 3.6 8.6 V10.9 C3.6 12.4 4.8 13.5 7 13.5 Z" fill="#f0f0f0"/><circle cx="5.3" cy="2.3" r="0.8" fill="#18222A"/><circle cx="8.7" cy="11.7" r="0.8" fill="#18222A"/></svg>
<span class="t" style="left:44.50px;top:432.67px;font-size:12px;color:#E6E6E6;font-family:'Liberation Sans',sans-serif;transform:scaleX(0.9233);transform-origin:0 0;">MachineLearning_BLSTM.py</span>
<div class="a" style="left:229px;top:430.4px;width:24px;height:16px;overflow:hidden"><span class="t" style="left:2px;top:2.2px;font-size:12px;color:#E6E6E6">31-0</span></div>
<div class="a" style="left:12px;top:457px;width:10px;height:1px;background:#6a757c;"></div>
<svg class="a" style="left:26px;top:449.88px;" width="12" height="15" viewBox="0 0 12 15"><path d="M1 1 H8 L11 4 V14 H1 Z" fill="none" stroke="#bdbdbd" stroke-width="1.1" stroke-linejoin="round"/><g fill="#bdbdbd"><rect x="3" y="4" width="1" height="3"/><rect x="6" y="4" width="1.8" height="3" rx="0.8"/><rect x="3" y="9" width="1.8" height="3" rx="0.8"/><rect x="7" y="9" width="1" height="3"/></g></svg>
<span class="t" style="left:44.50px;top:451.60px;font-size:12px;color:#E6E6E6;font-family:'Liberation Sans',sans-serif;transform:scaleX(0.9681);transform-origin:0 0;">workflow_model.sav</span>
<div class="a" style="left:229px;top:449.4px;width:24px;height:16px;overflow:hidden"><span class="t" style="left:2px;top:2.2px;font-size:12px;color:#E6E6E6">31-0</span></div>
<svg class="a" style="left:7px;top:152px;" width="10" height="6" viewBox="0 0 10 6"><path d="M0 0 L10 0 L5 6 Z" fill="#6a757c"/></svg>
<div class="a" style="left:14px;top:472px;width:227px;height:9px;background:#1e2a33;border-radius:4px;border:1px solid #2a3841"></div>
<div class="a" style="left:16px;top:473px;width:172px;height:7px;background:#787878;border-radius:3.5px"></div>
<svg class="a" style="left:7px;top:473px;" width="5" height="7" viewBox="0 0 5 7"><path d="M5 0 L0 3.5 L5 7 Z" fill="#3a4852"/></svg>
<svg class="a" style="left:245px;top:473px;" width="5" height="7" viewBox="0 0 5 7"><path d="M0 0 L5 3.5 L0 7 Z" fill="#3a4852"/></svg>
<svg class="a" style="left:2px;top:497px;" width="15" height="12" viewBox="0 0 15 12"><path d="M1 5 H4 V11 H1 Z" fill="#e8e8e8"/><path d="M5 5 L8 1 C9 0.5 10 1 9.5 2.5 L9 5 H13.5 C14.5 5 14.8 6 14.3 7 L12.5 10.5 C12 11 11.5 11 11 11 H5 Z" fill="none" stroke="#e8e8e8" stroke-width="1.4"/></svg>
<svg class="a" style="left:27px;top:497px;" width="14" height="13" viewBox="0 0 14 13"><rect x="0.7" y="0.7" width="8" height="7" rx="1" fill="none" stroke="#d0d0d0" stroke-width="1.2"/><rect x="2.7" y="2.7" width="8" height="7" rx="1" fill="#18222A" stroke="#d0d0d0" stroke-width="1.2"/><rect x="4.7" y="4.7" width="8.5" height="7.5" rx="1" fill="#d0d0d0"/><rect x="6.5" y="8" width="5" height="1.2" fill="#18222A"/></svg>
<svg class="a" style="left:52px;top:497px;" width="14" height="13" viewBox="0 0 14 13"><rect x="0.7" y="0.7" width="8" height="7" rx="1" fill="none" stroke="#d0d0d0" stroke-width="1.2"/><rect x="2.7" y="2.7" width="8" height="7" rx="1" fill="#18222A" stroke="#d0d0d0" stroke-width="1.2"/><rect x="4.7" y="4.7" width="8.5" height="7.5" rx="1" fill="#d0d0d0"/><path d="M9 5.8 V11 M6.4 8.4 H11.6" stroke="#18222A" stroke-width="1.3"/></svg>
<svg class="a" style="left:80px;top:496px;" width="10" height="13" viewBox="0 0 10 13"><path d="M5 1 L9 5 H6.5 V12 H1 V10 H3.5 V5 H1 Z" fill="#f0f0f0"/></svg>
<svg class="a" style="left:103px;top:497px;" width="12" height="12" viewBox="0 0 12 12"><rect x="0.7" y="0.7" width="10.6" height="10.6" rx="2" fill="none" stroke="#9aa0a4" stroke-width="1.2"/><rect x="3" y="5.4" width="6" height="1.3" fill="#9aa0a4"/></svg>
<svg class="a" style="left:128px;top:497px;" width="12" height="12" viewBox="0 0 12 12"><rect x="0.7" y="0.7" width="10.6" height="10.6" rx="2" fill="none" stroke="#c0c4c6" stroke-width="1.2"/><path d="M3 6 H9 M6 3 V9" stroke="#c0c4c6" stroke-width="1.3"/></svg>
<svg class="a" style="left:248px;top:497px;" width="13" height="11" viewBox="0 0 13 11"><g fill="#f0f0f0"><rect x="0" y="0" width="13" height="2"/><rect x="0" y="4.5" width="13" height="2"/><rect x="0" y="9" width="13" height="2"/></g></svg>
<div class="a fr" style="left:2px;top:522px;width:265px;height:284px"></div>
<div class="a" style="left:22px;top:524px;width:243px;height:19px;background:#1464A0;"></div>
<svg class="a" style="left:7px;top:530px;" width="10" height="6" viewBox="0 0 10 6"><path d="M0 0 L10 0 L5 6 Z" fill="#6a757c"/></svg>
<svg class="a" style="left:27px;top:526.5px;" width="14" height="14" viewBox="0 0 14 14"><path d="M7 0.5 C3.5 0.5 3.7 2 3.7 3.3 V5 H7.3 V5.8 H2.2 C1 5.8 0.4 7 0.4 8.6 C0.4 10.4 1.2 11.2 2.3 11.2 H3.6 V9.3 C3.6 8 4.5 7.1 5.7 7.1 H9 C10.1 7.1 10.4 6.3 10.4 5.4 V3.1 C10.4 1.6 9.2 0.5 7 0.5 Z" fill="#3a77b8"/><path d="M7 13.5 C10.5 13.5 10.3 12 10.3 10.7 V9 H6.7 V8.2 H11.8 C13 8.2 13.6 7 13.6 5.4 C13.6 3.6 12.8 2.8 11.7 2.8 H10.6 V4.7 C10.6 6 9.7 6.9 8.5 6.9 H5 C3.9 6.9 3.6 7.7 3.6 8.6 V10.9 C3.6 12.4 4.8 13.5 7 13.5 Z" fill="#f2c83a"/><circle cx="5.3" cy="2.3" r="0.8" fill="#18222A"/><circle cx="8.7" cy="11.7" r="0.8" fill="#18222A"/></svg>
<span class="t" style="left:44.80px;top:527.72px;font-size:12px;color:#E6E6E6;font-family:'Liberation Sans',sans-serif;transform:scaleX(0.9756);transform-origin:0 0;">systemMonitor.py</span>
<svg class="a" style="left:28px;top:547.5px;" width="6" height="10" viewBox="0 0 6 10"><path d="M0 0 L6 5 L0 10 Z" fill="#6a757c"/></svg>
<svg class="a" style="left:45px;top:546.5px;" width="11" height="12" viewBox="0 0 11 12"><rect width="11" height="12" rx="1" fill="#3a77b0"/><path d="M7.5 3.5 C7 3 6.5 2.8 5.7 2.8 C4.2 2.8 3.3 4 3.3 6 C3.3 8 4.2 9.2 5.7 9.2 C6.5 9.2 7 9 7.5 8.5" stroke="#18222A" stroke-width="1.3" fill="none"/></svg>
<span class="t" style="left:64.40px;top:546.72px;font-size:12px;color:#E6E6E6;font-family:'Liberation Sans',sans-serif;transform:scaleX(0.9970);transform-origin:0 0;">MainWindow</span>
<svg class="a" style="left:28px;top:566.5px;" width="6" height="10" viewBox="0 0 6 10"><path d="M0 0 L6 5 L0 10 Z" fill="#6a757c"/></svg>
<svg class="a" style="left:45px;top:565.5px;" width="11" height="12" viewBox="0 0 11 12"><rect width="11" height="12" rx="1" fill="#3a77b0"/><path d="M7.5 3.5 C7 3 6.5 2.8 5.7 2.8 C4.2 2.8 3.3 4 3.3 6 C3.3 8 4.2 9.2 5.7 9.2 C6.5 9.2 7 9 7.5 8.5" stroke="#18222A" stroke-width="1.3" fill="none"/></svg>
<span class="t" style="left:64.40px;top:565.72px;font-size:12px;color:#E6E6E6;font-family:'Liberation Sans',sans-serif;transform:scaleX(0.9074);transform-origin:0 0;">SplashScreen</span>
<div class="a" style="left:267px;top:95px;width:1px;height:713px;background:#2A3841;"></div>
<div class="a" style="left:269px;top:95px;width:4px;height:713px;background:#31424A;"></div>
<div class="a" style="left:1069px;top:95px;width:5px;height:713px;background:#31424A;"></div>
<div class="a" style="left:0px;top:486px;width:269px;height:4px;background:#31424A;"></div>
<div class="a" style="left:273px;top:282px;width:796px;height:5px;background:#31424A;"></div>
<div class="a" style="left:1074px;top:486px;width:426px;height:4px;background:#31424A;"></div>
<span class="t" style="left:279.00px;top:100.22px;font-size:12px;color:#F0F0F0;font-family:'Liberation Sans',sans-serif;transform:scaleX(0.8130);transform-origin:0 0;">D:\PYTHON\STUDENT\CPU\2\Part2\systemMonitor.py</span>
<svg class="a" style="left:278px;top:121px;" width="14" height="11" viewBox="0 0 14 11"><rect x="0.8" y="0.8" width="12.4" height="9.4" fill="none" stroke="#f0f0f0" stroke-width="1.6"/><rect x="0.8" y="0.8" width="6" height="2.6" fill="#f0f0f0"/></svg>
<div class="a" style="left:273px;top:114px;width:792px;height:1px;background:#26333C;"></div>
<div class="a" style="left:273px;top:137px;width:792px;height:1px;background:#26333C;"></div>
<div class="a" style="left:298px;top:116px;width:82px;height:19px;background:#2B3943;border-radius:2px 2px 0 0"></div>
<span class="t" style="left:301.80px;top:120.22px;font-size:12px;color:#D8D8D8;font-family:'Liberation Sans',sans-serif;transform:scaleX(0.8200);transform-origin:0 0;">ensemble.py</span>
<svg class="a" style="left:364.5px;top:122px;" width="8" height="8" viewBox="0 0 8 8"><path d="M0.5 0.5 L7.5 7.5 M7.5 0.5 L0.5 7.5" stroke="#8a949a" stroke-width="1.2"/></svg>
<div class="a" style="left:382px;top:116px;width:102px;height:19px;background:#44525C;border-radius:2px 2px 0 0"></div>
<div class="a" style="left:382px;top:133px;width:102px;height:2.5px;background:#1B6AAE;"></div>
<span class="t" style="left:384.80px;top:119.72px;font-size:12px;color:#E8E8E8;font-family:'Liberation Sans',sans-serif;transform:scaleX(0.8300);transform-origin:0 0;">systemMonitor.py</span>
<svg class="a" style="left:469px;top:121.5px;" width="8" height="8" viewBox="0 0 8 8"><path d="M0.5 0.5 L7.5 7.5 M7.5 0.5 L0.5 7.5" stroke="#7d8a92" stroke-width="1.2"/></svg>
<svg class="a" style="left:1050px;top:120px;" width="12" height="10" viewBox="0 0 12 10"><g fill="#f0f0f0"><rect x="0" y="0" width="12" height="2"/><rect x="0" y="4.0" width="12" height="2"/><rect x="0" y="8" width="12" height="2"/></g></svg>
<div class="a fr" style="left:278px;top:140px;width:787px;height:138px"></div>
<div class="a" style="left:279px;top:141px;width:67px;height:136px;background:#1E2933;"></div>
<div class="a" style="left:901px;top:141px;width:1px;height:136px;background:#2E3B44;"></div>
<div class="a" style="left:1040px;top:141px;width:10px;height:136px;background:#1F2A34;"></div>
<div class="a" style="left:1041px;top:160px;width:7px;height:8px;background:#F0A30A;"></div>
<svg class="a" style="left:1053px;top:146px;" width="8" height="5" viewBox="0 0 8 5"><path d="M0 5 L4 0 L8 5 Z" fill="#3a4852"/></svg>
<div class="a" style="left:1052px;top:154px;width:9px;height:100px;background:#18222A;border:1px solid #2a3841;border-radius:4px"></div>
<svg class="a" style="left:1053px;top:160px;" width="8" height="8" viewBox="0 0 8 8"><circle cx="4" cy="4" r="3.6" fill="#8a8a8a"/></svg>
<div class="a" style="left:279px;top:141px;width:760px;height:122.8px;overflow:hidden">
<span class="t" style="left:27.50px;top:6.28px;font-size:12.5px;color:#8C8C8C;font-family:'Liberation Mono',monospace;transform:scaleX(0.9324);transform-origin:0 0;">19</span>
<span class="t" style="left:70.00px;top:6.28px;font-size:12.5px;color:#C670E0;font-family:'Liberation Mono',monospace;transform:scaleX(0.9330);transform-origin:0 0;">import</span>
<span class="t" style="left:112.00px;top:6.28px;font-size:12.5px;color:#F0F0F0;font-family:'Liberation Mono',monospace;transform:scaleX(0.9332);transform-origin:0 0;"> pyqtgraph </span>
<span class="t" style="left:189.00px;top:6.28px;font-size:12.5px;color:#C670E0;font-family:'Liberation Mono',monospace;transform:scaleX(0.9324);transform-origin:0 0;">as</span>
<span class="t" style="left:203.00px;top:6.28px;font-size:12.5px;color:#F0F0F0;font-family:'Liberation Mono',monospace;transform:scaleX(0.9327);transform-origin:0 0;"> pg</span>
<span class="t" style="left:27.50px;top:21.94px;font-size:12.5px;color:#8C8C8C;font-family:'Liberation Mono',monospace;transform:scaleX(0.9324);transform-origin:0 0;">20</span>
<span class="t" style="left:70.00px;top:21.94px;font-size:12.5px;color:#C670E0;font-family:'Liberation Mono',monospace;transform:scaleX(0.9328);transform-origin:0 0;">from</span>
<span class="t" style="left:98.00px;top:21.94px;font-size:12.5px;color:#F0F0F0;font-family:'Liberation Mono',monospace;transform:scaleX(0.9331);transform-origin:0 0;"> pathlib </span>
<span class="t" style="left:161.00px;top:21.94px;font-size:12.5px;color:#C670E0;font-family:'Liberation Mono',monospace;transform:scaleX(0.9330);transform-origin:0 0;">import</span>
<span class="t" style="left:203.00px;top:21.94px;font-size:12.5px;color:#F0F0F0;font-family:'Liberation Mono',monospace;transform:scaleX(0.9329);transform-origin:0 0;"> Path</span>
<span class="t" style="left:27.50px;top:37.62px;font-size:12.5px;color:#8C8C8C;font-family:'Liberation Mono',monospace;transform:scaleX(0.9324);transform-origin:0 0;">21</span>
<span class="t" style="left:70.00px;top:37.62px;font-size:12.5px;color:#C670E0;font-family:'Liberation Mono',monospace;transform:scaleX(0.9330);transform-origin:0 0;">import</span>
<span class="t" style="left:112.00px;top:37.62px;font-size:12.5px;color:#F0F0F0;font-family:'Liberation Mono',monospace;transform:scaleX(0.9331);transform-origin:0 0;"> numpy </span>
<span class="t" style="left:161.00px;top:37.62px;font-size:12.5px;color:#C670E0;font-family:'Liberation Mono',monospace;transform:scaleX(0.9324);transform-origin:0 0;">as</span>
<span class="t" style="left:175.00px;top:37.62px;font-size:12.5px;color:#F0F0F0;font-family:'Liberation Mono',monospace;transform:scaleX(0.9327);transform-origin:0 0;"> np</span>
<span class="t" style="left:27.50px;top:53.28px;font-size:12.5px;color:#8C8C8C;font-family:'Liberation Mono',monospace;transform:scaleX(0.9324);transform-origin:0 0;">22</span>
<span class="t" style="left:70.00px;top:53.28px;font-size:12.5px;color:#C670E0;font-family:'Liberation Mono',monospace;transform:scaleX(0.9328);transform-origin:0 0;">from</span>
<span class="t" style="left:98.00px;top:53.28px;font-size:12.5px;color:#F0F0F0;font-family:'Liberation Mono',monospace;transform:scaleX(0.9330);transform-origin:0 0;"> collections </span>
<span class="t" style="left:189.00px;top:53.28px;font-size:12.5px;color:#C670E0;font-family:'Liberation Mono',monospace;transform:scaleX(0.9330);transform-origin:0 0;">import</span>
<span class="t" style="left:231.00px;top:53.28px;font-size:12.5px;color:#F0F0F0;font-family:'Liberation Mono',monospace;transform:scaleX(0.9330);transform-origin:0 0;"> deque</span>
<span class="t" style="left:27.50px;top:68.96px;font-size:12.5px;color:#8C8C8C;font-family:'Liberation Mono',monospace;transform:scaleX(0.9324);transform-origin:0 0;">23</span>
<span class="t" style="left:27.50px;top:84.62px;font-size:12.5px;color:#8C8C8C;font-family:'Liberation Mono',monospace;transform:scaleX(0.9324);transform-origin:0 0;">24</span>
<span class="t" style="left:27.50px;top:100.30px;font-size:12.5px;color:#8C8C8C;font-family:'Liberation Mono',monospace;transform:scaleX(0.9324);transform-origin:0 0;">25</span>
<span class="t" style="left:70.00px;top:100.30px;font-size:12.5px;color:#999999;font-family:'Liberation Mono',monospace;transform:scaleX(0.9331);transform-origin:0 0;"># GLOBALS</span>
<span class="t" style="left:27.50px;top:115.97px;font-size:12.5px;color:#8C8C8C;font-family:'Liberation Mono',monospace;transform:scaleX(0.9324);transform-origin:0 0;">26</span>
<span class="t" style="left:70.00px;top:115.97px;font-size:12.5px;color:#F0F0F0;font-family:'Liberation Mono',monospace;transform:scaleX(0.9331);transform-origin:0 0;">counter = </span>
<span class="t" style="left:140.00px;top:115.97px;font-size:12.5px;color:#FAED5C;font-family:'Liberation Mono',monospace;transform:scaleX(0.9314);transform-origin:0 0;">0</span>
</div>
<svg class="a" style="left:281px;top:159.6px;" width="15" height="14" viewBox="0 0 15 14"><path d="M7.5 0.5 L14.5 13.5 H0.5 Z" fill="#F0A30A" stroke="#F0A30A" stroke-linejoin="round"/><rect x="6.6" y="4.5" width="1.8" height="5" fill="#18222A"/><rect x="6.6" y="10.5" width="1.8" height="1.8" fill="#18222A"/></svg>
<svg class="a" style="left:281px;top:175.2px;" width="15" height="14" viewBox="0 0 15 14"><path d="M7.5 0.5 L14.5 13.5 H0.5 Z" fill="#F0A30A" stroke="#F0A30A" stroke-linejoin="round"/><rect x="6.6" y="4.5" width="1.8" height="5" fill="#18222A"/><rect x="6.6" y="10.5" width="1.8" height="1.8" fill="#18222A"/></svg>
<svg class="a" style="left:284px;top:266px;" width="5" height="7" viewBox="0 0 5 7"><path d="M5 0 L0 3.5 L5 7 Z" fill="#3a4852"/></svg>
<div class="a" style="left:292px;top:266px;width:740px;height:8px;background:#1e2a33;border-radius:4px"></div>
<div class="a" style="left:293px;top:266.5px;width:400px;height:7px;background:#787878;border-radius:3.5px"></div>
<svg class="a" style="left:278px;top:294.5px;" width="14" height="11" viewBox="0 0 14 11"><rect x="0.8" y="0.8" width="12.4" height="9.4" fill="none" stroke="#f0f0f0" stroke-width="1.6"/><rect x="0.8" y="0.8" width="6" height="2.6" fill="#f0f0f0"/></svg>
<div class="a" style="left:273px;top:311px;width:792px;height:1px;background:#26333C;"></div>
<div class="a" style="left:299px;top:289px;width:83px;height:21px;background:#56656E;border-radius:3px 3px 0 0"></div>
<div class="a" style="left:299px;top:307px;width:83px;height:3px;background:#1B6AAE;"></div>
<span class="t" style="left:301.70px;top:292.72px;font-size:12px;color:#E8E8E8;font-family:'Liberation Sans',sans-serif;transform:scaleX(0.8334);transform-origin:0 0;">Console 11/A</span>
<svg class="a" style="left:367px;top:295px;" width="8" height="8" viewBox="0 0 8 8"><path d="M0.5 0.5 L7.5 7.5 M7.5 0.5 L0.5 7.5" stroke="#7d8a92" stroke-width="1.2"/></svg>
<svg class="a" style="left:1050px;top:294px;" width="12" height="10" viewBox="0 0 12 10"><g fill="#f0f0f0"><rect x="0" y="0" width="12" height="2"/><rect x="0" y="4.0" width="12" height="2"/><rect x="0" y="8" width="12" height="2"/></g></svg>
<div class="a fr" style="left:277px;top:313px;width:788px;height:491px"></div>
<svg class="a" style="left:1052px;top:320px;" width="8" height="5" viewBox="0 0 8 5"><path d="M0 5 L4 0 L8 5 Z" fill="#3a4852"/></svg>
<div class="a" style="left:1052px;top:327px;width:9px;height:461px;background:#18222A;border:1px solid #2a3841;border-radius:4px"></div>
<div class="a" style="left:1053px;top:468px;width:7px;height:239px;background:#787878;border-radius:3.5px"></div>
<svg class="a" style="left:1052px;top:791px;" width="8" height="5" viewBox="0 0 8 5"><path d="M0 0 L4 5 L8 0 Z" fill="#3a4852"/></svg>
<div class="a" style="left:278px;top:314px;width:772px;height:489px;overflow:hidden">
<span class="t" style="left:5.00px;top:25.38px;font-size:12.5px;color:#F0F0F0;font-family:'Liberation Mono',monospace;transform:scaleX(0.9332);transform-origin:0 0;"> *c* argument looks like a single numeric RGB or RGBA sequence, which should be avoided as value-mapping</span>
<span class="t" style="left:5.00px;top:41.08px;font-size:12.5px;color:#F0F0F0;font-family:'Liberation Mono',monospace;transform:scaleX(0.9332);transform-origin:0 0;">will have precedence in case its length matches with *x* &amp; *y*.  Please use the *color* keyword-argument or</span>
<span class="t" style="left:5.00px;top:56.77px;font-size:12.5px;color:#F0F0F0;font-family:'Liberation Mono',monospace;transform:scaleX(0.9332);transform-origin:0 0;">provide a 2-D array with a single row if you intend to specify the same RGB or RGBA value for all points.</span>
<span class="t" style="left:5.00px;top:72.47px;font-size:12.5px;color:#F0F0F0;font-family:'Liberation Mono',monospace;transform:scaleX(0.9332);transform-origin:0 0;">*c* argument looks like a single numeric RGB or RGBA sequence, which should be avoided as value-mapping will</span>
<span class="t" style="left:5.00px;top:88.17px;font-size:12.5px;color:#F0F0F0;font-family:'Liberation Mono',monospace;transform:scaleX(0.9332);transform-origin:0 0;">have precedence in case its length matches with *x* &amp; *y*.  Please use the *color* keyword-argument or</span>
<span class="t" style="left:5.00px;top:103.88px;font-size:12.5px;color:#F0F0F0;font-family:'Liberation Mono',monospace;transform:scaleX(0.9332);transform-origin:0 0;">provide a 2-D array with a single row if you intend to specify the same RGB or RGBA value for all points.</span>
<span class="t" style="left:5.00px;top:135.38px;font-size:12.5px;color:#2AB52A;font-family:'Liberation Mono',monospace;transform:scaleX(0.9328);transform-origin:0 0;">In [</span>
<span class="t" style="left:33.00px;top:135.38px;font-size:12.5px;color:#5CF05C;font-family:'Liberation Mono',monospace;transform:scaleX(0.9314);transform-origin:0 0;">2</span>
<span class="t" style="left:40.00px;top:135.38px;font-size:12.5px;color:#2AB52A;font-family:'Liberation Mono',monospace;transform:scaleX(0.9327);transform-origin:0 0;">]: </span>
<span class="t" style="left:61.00px;top:135.38px;font-size:12.5px;color:#F0F0F0;font-family:'Liberation Mono',monospace;transform:scaleX(0.9331);transform-origin:0 0;">runfile(</span>
<span class="t" style="left:117.00px;top:135.38px;font-size:12.5px;color:#A9D982;font-family:'Liberation Mono',monospace;font-style:italic;transform:scaleX(0.9332);transform-origin:0 0;">'D:/PYTHON/STUDENT/CPU/2/Part2/systemMonitor.py', wdir='D:/PYTHON/STUDENT/CPU/2/Part2')</span>
</div>
<svg class="a" style="left:1079px;top:101px;" width="14" height="14" viewBox="0 0 14 14"><path d="M1 1 H10.5 L13 3.5 V13 H1 Z" fill="none" stroke="#d8d8d8" stroke-width="1.5"/><rect x="3.5" y="1.5" width="6" height="3.5" fill="#d8d8d8"/><rect x="3.5" y="8" width="7" height="4" fill="none" stroke="#d8d8d8" stroke-width="1.1"/></svg>
<svg class="a" style="left:1107px;top:101px;" width="14" height="14" viewBox="0 0 14 14"><path d="M0.6 0.6 H6 L7.4 2 V6.4 H0.6 Z" fill="none" stroke="#c8c8c8" stroke-width="1.1"/><rect x="2" y="1" width="3" height="2" fill="#c8c8c8"/><path d="M6.6 6.6 H12 L13.4 8 V13.4 H6.6 Z" fill="#18222A" stroke="#c8c8c8" stroke-width="1.1"/><rect x="8" y="7" width="3" height="2" fill="#c8c8c8"/></svg>
<svg class="a" style="left:1134px;top:100px;" width="16" height="16" viewBox="0 0 16 16"><path d="M1 4 L4 1 H8 V11 H1 Z" fill="none" stroke="#e0e0e0" stroke-width="1.4"/><path d="M6 5 L9 2 H14 V15 H6 Z" fill="#18222A" stroke="#e0e0e0" stroke-width="1.4"/></svg>
<svg class="a" style="left:1165px;top:103px;" width="11" height="11" viewBox="0 0 11 11"><path d="M1.5 1.5 L9.5 9.5 M9.5 1.5 L1.5 9.5" stroke="#f4f4f4" stroke-width="3"/></svg>
<svg class="a" style="left:1191px;top:101px;" width="15" height="14" viewBox="0 0 15 14"><g stroke="#e8e8e8" stroke-width="1.7"><path d="M1 1 L5 5 M5 1 L1 5"/><path d="M10 1 L14 5 M14 1 L10 5"/><path d="M10 9 L14 13 M14 9 L10 13"/></g></svg>
<div class="a" style="left:1216px;top:96px;width:1px;height:24px;background:#3a4852;"></div>
<svg class="a" style="left:1226.7px;top:101.5px;" width="13" height="13" viewBox="0 0 13 13"><circle cx="6.5" cy="6.5" r="6.2" fill="#f4f4f4"/><path d="M8.2 3.2 L4.6 6.5 L8.2 9.8 M4.8 6.5 H10.5" stroke="#18222A" stroke-width="2" fill="none"/></svg>
<svg class="a" style="left:1254.8px;top:101.5px;" width="13" height="13" viewBox="0 0 13 13"><circle cx="6.5" cy="6.5" r="6.2" fill="#f4f4f4"/><path d="M4.8 3.2 L8.4 6.5 L4.8 9.8 M8.2 6.5 H2.5" stroke="#18222A" stroke-width="2" fill="none"/></svg>
<div class="a" style="left:1279px;top:96px;width:1px;height:24px;background:#3a4852;"></div>
<svg class="a" style="left:1288.5px;top:101.5px;" width="15" height="15" viewBox="0 0 15 15"><circle cx="6" cy="6" r="4.8" fill="none" stroke="#9aa0a4" stroke-width="1.5"/><path d="M9.5 9.5 L14 14" stroke="#9aa0a4" stroke-width="2"/><path d="M3.5 6 H8.5" stroke="#9aa0a4" stroke-width="1.4"/></svg>
<svg class="a" style="left:1309.5px;top:101.5px;" width="15" height="15" viewBox="0 0 15 15"><circle cx="6" cy="6" r="4.8" fill="none" stroke="#9aa0a4" stroke-width="1.5"/><path d="M9.5 9.5 L14 14" stroke="#9aa0a4" stroke-width="2"/><path d="M3.5 6 H8.5" stroke="#9aa0a4" stroke-width="1.4"/><path d="M6 3.5 V8.5" stroke="#9aa0a4" stroke-width="1.4"/></svg>
<div class="a" style="left:1328.5px;top:98.5px;width:58px;height:19px;background:#18222A;border:1px solid #31424A;border-radius:3px"></div>
<span class="t" style="left:1336.80px;top:102.52px;font-size:12px;color:#F0F0F0;font-family:'Liberation Sans',sans-serif;transform:scaleX(0.8404);transform-origin:0 0;">105 %</span>
<svg class="a" style="left:1481px;top:102.5px;" width="12" height="10.5" viewBox="0 0 12 10.5"><g fill="#f0f0f0"><rect x="0" y="0" width="12" height="2"/><rect x="0" y="4.25" width="12" height="2"/><rect x="0" y="8.5" width="12" height="2"/></g></svg>
<div class="a fr" style="left:1075px;top:127px;width:339px;height:338px"></div>
<div class="a" style="left:1414px;top:127px;width:8px;height:338px;background:#2A3841;"></div>
<div class="a fr" style="left:1423px;top:127px;width:80px;height:338px"></div>
<div class="a" style="left:1083.5px;top:181.5px;width:323px;height:229px;background:#ffffff;"></div>
<div class="a" style="left:1127.5px;top:200px;width:273.5px;height:89.5px;background:#7AB87E;"></div>
<div class="a" style="left:1127.5px;top:289.5px;width:273.5px;height:89.5px;background:#FF8C7C;"></div>
<div class="a" style="left:1127px;top:199.5px;width:274.5px;height:380px;border:1px solid #333;height:180px;background:transparent"></div>
<span class="t" style="left:1158.20px;top:186.52px;font-size:12px;color:#222;font-family:'Liberation Sans',sans-serif;transform:scaleX(0.9278);transform-origin:0 0;">Ensemble Classifier (Test set) with Entropy</span>
<div class="a" style="left:1124px;top:210px;width:3px;height:1px;background:#333;"></div>
<span class="t" style="left:1107.40px;top:205.18px;font-size:10px;color:#333;font-family:'Liberation Sans',sans-serif;transform:scaleX(0.9348);transform-origin:0 0;">1.5</span>
<div class="a" style="left:1124px;top:232px;width:3px;height:1px;background:#333;"></div>
<span class="t" style="left:1107.40px;top:226.68px;font-size:10px;color:#333;font-family:'Liberation Sans',sans-serif;transform:scaleX(0.9348);transform-origin:0 0;">1.0</span>
<div class="a" style="left:1124px;top:253px;width:3px;height:1px;background:#333;"></div>
<span class="t" style="left:1107.40px;top:248.18px;font-size:10px;color:#333;font-family:'Liberation Sans',sans-serif;transform:scaleX(0.9348);transform-origin:0 0;">0.5</span>
<div class="a" style="left:1124px;top:274px;width:3px;height:1px;background:#333;"></div>
<span class="t" style="left:1107.40px;top:269.68px;font-size:10px;color:#333;font-family:'Liberation Sans',sans-serif;transform:scaleX(0.9348);transform-origin:0 0;">0.0</span>
<div class="a" style="left:1124px;top:296px;width:3px;height:1px;background:#333;"></div>
<span class="t" style="left:1101.40px;top:291.18px;font-size:10px;color:#333;font-family:'Liberation Sans',sans-serif;transform:scaleX(0.9620);transform-origin:0 0;">−0.5</span>
<div class="a" style="left:1124px;top:318px;width:3px;height:1px;background:#333;"></div>
<span class="t" style="left:1101.40px;top:312.68px;font-size:10px;color:#333;font-family:'Liberation Sans',sans-serif;transform:scaleX(0.9620);transform-origin:0 0;">−1.0</span>
<div class="a" style="left:1124px;top:339px;width:3px;height:1px;background:#333;"></div>
<span class="t" style="left:1101.40px;top:334.18px;font-size:10px;color:#333;font-family:'Liberation Sans',sans-serif;transform:scaleX(0.9620);transform-origin:0 0;">−1.5</span>
<div class="a" style="left:1124px;top:360px;width:3px;height:1px;background:#333;"></div>
<span class="t" style="left:1101.40px;top:355.68px;font-size:10px;color:#333;font-family:'Liberation Sans',sans-serif;transform:scaleX(0.9620);transform-origin:0 0;">−2.0</span>
<div class="a" style="left:1142px;top:379px;width:1px;height:3px;background:#333;"></div>
<span class="t" style="left:1132.50px;top:384.18px;font-size:10px;color:#333;font-family:'Liberation Sans',sans-serif;transform:scaleX(0.9620);transform-origin:0 0;">−1.5</span>
<div class="a" style="left:1175px;top:379px;width:1px;height:3px;background:#333;"></div>
<span class="t" style="left:1165.59px;top:384.18px;font-size:10px;color:#333;font-family:'Liberation Sans',sans-serif;transform:scaleX(0.9620);transform-origin:0 0;">−1.0</span>
<div class="a" style="left:1208px;top:379px;width:1px;height:3px;background:#333;"></div>
<span class="t" style="left:1198.68px;top:384.18px;font-size:10px;color:#333;font-family:'Liberation Sans',sans-serif;transform:scaleX(0.9620);transform-origin:0 0;">−0.5</span>
<div class="a" style="left:1241px;top:379px;width:1px;height:3px;background:#333;"></div>
<span class="t" style="left:1234.77px;top:384.18px;font-size:10px;color:#333;font-family:'Liberation Sans',sans-serif;transform:scaleX(0.9348);transform-origin:0 0;">0.0</span>
<div class="a" style="left:1274px;top:379px;width:1px;height:3px;background:#333;"></div>
<span class="t" style="left:1267.86px;top:384.18px;font-size:10px;color:#333;font-family:'Liberation Sans',sans-serif;transform:scaleX(0.9348);transform-origin:0 0;">0.5</span>
<div class="a" style="left:1307px;top:379px;width:1px;height:3px;background:#333;"></div>
<span class="t" style="left:1300.95px;top:384.18px;font-size:10px;color:#333;font-family:'Liberation Sans',sans-serif;transform:scaleX(0.9348);transform-origin:0 0;">1.0</span>
<div class="a" style="left:1341px;top:379px;width:1px;height:3px;background:#333;"></div>
<span class="t" style="left:1334.04px;top:384.18px;font-size:10px;color:#333;font-family:'Liberation Sans',sans-serif;transform:scaleX(0.9348);transform-origin:0 0;">1.5</span>
<div class="a" style="left:1374px;top:379px;width:1px;height:3px;background:#333;"></div>
<span class="t" style="left:1367.13px;top:384.18px;font-size:10px;color:#333;font-family:'Liberation Sans',sans-serif;transform:scaleX(0.9348);transform-origin:0 0;">2.0</span>
<span class="t" style="left:1253.50px;top:395.58px;font-size:10px;color:#333;font-family:'Liberation Sans',sans-serif;transform:scaleX(0.9607);transform-origin:0 0;">Time</span>
<span class="t" style="left:1085.50px;top:286.66px;font-size:9px;color:#333;font-family:'Liberation Sans',sans-serif;transform:scaleX(1.6667);transform-origin:0 0;transform:rotate(-90deg);transform-origin:50% 50%;">CPU</span>
<div class="a" style="left:1362px;top:205px;width:34.5px;height:26.5px;background:rgba(255,255,255,0.8);border:1px solid #cfd8cf;border-radius:2px"></div>
<svg class="a" style="left:1369.5px;top:208.5px;" width="8" height="8" viewBox="0 0 8 8"><circle cx="4" cy="4" r="3.3" fill="#F08070"/></svg>
<svg class="a" style="left:1369.5px;top:220.5px;" width="8" height="8" viewBox="0 0 8 8"><circle cx="4" cy="4" r="3.3" fill="#5a9a5a"/></svg>
<span class="t" style="left:1387.50px;top:207.68px;font-size:10px;color:#333;font-family:'Liberation Sans',sans-serif;transform:scaleX(1.0787);transform-origin:0 0;">0</span>
<span class="t" style="left:1387.50px;top:219.68px;font-size:10px;color:#333;font-family:'Liberation Sans',sans-serif;transform:scaleX(1.0787);transform-origin:0 0;">1</span>
<svg class="a" style="left:1189.5px;top:239.5px;" width="8" height="8" viewBox="0 0 8 8"><circle cx="4" cy="4" r="3.5" fill="#006400"/></svg>
<svg class="a" style="left:1331px;top:332.4px;" width="8" height="8" viewBox="0 0 8 8"><circle cx="4" cy="4" r="3.5" fill="#FF1A1A"/></svg>
<div class="a" style="left:1433px;top:130px;width:56px;height:40px;background:#fff;"></div>
<div class="a" style="left:1441px;top:134px;width:45px;height:15.5px;background:#7AB87E;"></div>
<div class="a" style="left:1441px;top:149.5px;width:45px;height:12.5px;background:#FF8C7C;"></div>
<div class="a" style="left:1453px;top:131.5px;width:30px;height:1px;background:#b8b8b8;"></div>
<div class="a" style="left:1481px;top:135px;width:4px;height:4px;background:#e8f0e8;"></div>
<div class="a" style="left:1437px;top:136.0px;width:3px;height:1px;background:#c0c0c0;"></div>
<div class="a" style="left:1437px;top:140.5px;width:3px;height:1px;background:#c0c0c0;"></div>
<div class="a" style="left:1437px;top:145.0px;width:3px;height:1px;background:#c0c0c0;"></div>
<div class="a" style="left:1437px;top:149.5px;width:3px;height:1px;background:#c0c0c0;"></div>
<div class="a" style="left:1437px;top:154.0px;width:3px;height:1px;background:#c0c0c0;"></div>
<div class="a" style="left:1437px;top:158.5px;width:3px;height:1px;background:#c0c0c0;"></div>
<div class="a" style="left:1444.0px;top:164px;width:3px;height:1px;background:#c0c0c0;"></div>
<div class="a" style="left:1450.5px;top:164px;width:3px;height:1px;background:#c0c0c0;"></div>
<div class="a" style="left:1457.0px;top:164px;width:3px;height:1px;background:#c0c0c0;"></div>
<div class="a" style="left:1463.5px;top:164px;width:3px;height:1px;background:#c0c0c0;"></div>
<div class="a" style="left:1470.0px;top:164px;width:3px;height:1px;background:#c0c0c0;"></div>
<div class="a" style="left:1476.5px;top:164px;width:3px;height:1px;background:#c0c0c0;"></div>
<div class="a" style="left:1483.0px;top:164px;width:3px;height:1px;background:#c0c0c0;"></div>
<div class="a" style="left:1463px;top:167px;width:6px;height:1px;background:#c8c8c8;"></div>
<div class="a" style="left:1451px;top:140px;width:1.5px;height:1.5px;background:#206020;"></div>
<div class="a" style="left:1477px;top:156px;width:1.5px;height:1.5px;background:#c02020;"></div>
<div class="a" style="left:1432px;top:173.5px;width:58px;height:40px;background:#1E7FD0;border-radius:2px"></div>
<div class="a" style="left:1434.5px;top:175.5px;width:53px;height:36px;background:#fff;"></div>
<div class="a" style="left:1442.5px;top:179.5px;width:42px;height:15.5px;background:#7AB87E;"></div>
<div class="a" style="left:1442.5px;top:195.0px;width:42px;height:8.5px;background:#FF8C7C;"></div>
<div class="a" style="left:1454.5px;top:177.0px;width:30px;height:1px;background:#b8b8b8;"></div>
<div class="a" style="left:1479.5px;top:180.5px;width:4px;height:4px;background:#e8f0e8;"></div>
<div class="a" style="left:1438.5px;top:181.5px;width:3px;height:1px;background:#c0c0c0;"></div>
<div class="a" style="left:1438.5px;top:186.0px;width:3px;height:1px;background:#c0c0c0;"></div>
<div class="a" style="left:1438.5px;top:190.5px;width:3px;height:1px;background:#c0c0c0;"></div>
<div class="a" style="left:1438.5px;top:195.0px;width:3px;height:1px;background:#c0c0c0;"></div>
<div class="a" style="left:1438.5px;top:199.5px;width:3px;height:1px;background:#c0c0c0;"></div>
<div class="a" style="left:1438.5px;top:204.0px;width:3px;height:1px;background:#c0c0c0;"></div>
<div class="a" style="left:1445.5px;top:205.5px;width:3px;height:1px;background:#c0c0c0;"></div>
<div class="a" style="left:1452.0px;top:205.5px;width:3px;height:1px;background:#c0c0c0;"></div>
<div class="a" style="left:1458.5px;top:205.5px;width:3px;height:1px;background:#c0c0c0;"></div>
<div class="a" style="left:1465.0px;top:205.5px;width:3px;height:1px;background:#c0c0c0;"></div>
<div class="a" style="left:1471.5px;top:205.5px;width:3px;height:1px;background:#c0c0c0;"></div>
<div class="a" style="left:1478.0px;top:205.5px;width:3px;height:1px;background:#c0c0c0;"></div>
<div class="a" style="left:1484.5px;top:205.5px;width:3px;height:1px;background:#c0c0c0;"></div>
<div class="a" style="left:1464.5px;top:208.5px;width:6px;height:1px;background:#c8c8c8;"></div>
<div class="a" style="left:1452.5px;top:185.5px;width:1.5px;height:1.5px;background:#206020;"></div>
<div class="a" style="left:1475.5px;top:197.5px;width:1.5px;height:1.5px;background:#c02020;"></div>
<div class="a" style="left:1075px;top:465px;width:425px;height:1px;background:#56626a;"></div>
<div class="a" style="left:1233.4px;top:466px;width:81.6px;height:16.5px;background:#31424A;border-radius:0 0 2px 2px"></div>
<span class="t" style="left:1236.50px;top:468.72px;font-size:12px;color:#E0E0E0;font-family:'Liberation Sans',sans-serif;transform:scaleX(0.8461);transform-origin:0 0;">Variable explorer</span>
<div class="a" style="left:1317px;top:466px;width:27.7px;height:18.5px;background:#56656E;border-radius:0 0 3px 3px"></div>
<div class="a" style="left:1317px;top:466px;width:27.7px;height:2px;background:#1D6FB8;"></div>
<span class="t" style="left:1320.50px;top:470.52px;font-size:12px;color:#E8E8E8;font-family:'Liberation Sans',sans-serif;transform:scaleX(0.7681);transform-origin:0 0;">Plots</span>
<svg class="a" style="left:1081px;top:496px;" width="11" height="9" viewBox="0 0 11 9"><rect x="0.7" y="0.7" width="9.6" height="7.6" fill="none" stroke="#f0f0f0" stroke-width="1.4"/><rect x="0.7" y="0.7" width="5" height="2.2" fill="#f0f0f0"/></svg>
<div class="a" style="left:1099px;top:491.5px;width:49px;height:18px;background:#56656E;border-radius:3px 3px 0 0"></div>
<div class="a" style="left:1099px;top:507px;width:49px;height:2.5px;background:#1B6AAE;"></div>
<span class="t" style="left:1102.50px;top:494.22px;font-size:12px;color:#E8E8E8;font-family:'Liberation Sans',sans-serif;transform:scaleX(0.8520);transform-origin:0 0;">history.py</span>
<svg class="a" style="left:1483px;top:497px;" width="9.5" height="8" viewBox="0 0 9.5 8"><g fill="#f0f0f0"><rect x="0" y="0" width="9.5" height="2"/><rect x="0" y="3.0" width="9.5" height="2"/><rect x="0" y="6" width="9.5" height="2"/></g></svg>
<div class="a fr" style="left:1076px;top:511px;width:421px;height:273px"></div>
<div class="a" style="left:1079px;top:513px;width:27px;height:270px;background:#1B2630;"></div>
<svg class="a" style="left:1484px;top:515px;" width="8" height="5" viewBox="0 0 8 5"><path d="M0 5 L4 0 L8 5 Z" fill="#3a4852"/></svg>
<div class="a" style="left:1483.5px;top:522px;width:9px;height:250px;background:#18222A;border:1px solid #2a3841;border-radius:4px"></div>
<div class="a" style="left:1484.5px;top:746.5px;width:7px;height:20.5px;background:#787878;border-radius:3.5px"></div>
<svg class="a" style="left:1484px;top:774px;" width="8" height="5" viewBox="0 0 8 5"><path d="M0 0 L4 5 L8 0 Z" fill="#3a4852"/></svg>
<div class="a" style="left:1106px;top:767.5px;width:374px;height:15.5px;background:#333E47;"></div>
<div class="a" style="left:1157.6px;top:736.5px;width:7.0px;height:15.5px;background:#0BA50B;"></div>
<div class="a" style="left:1150.6px;top:767.5px;width:7.0px;height:15.5px;background:#0BA50B;"></div>
<span class="t" style="left:1108.60px;top:519.38px;font-size:12.5px;color:#A9D982;font-family:'Liberation Mono',monospace;font-style:italic;transform:scaleX(0.9327);transform-origin:0 0;">3')</span>
<span class="t" style="left:1108.60px;top:535.15px;font-size:12.5px;color:#F0F0F0;font-family:'Liberation Mono',monospace;transform:scaleX(0.9331);transform-origin:0 0;">runfile(</span>
<span class="t" style="left:1164.60px;top:535.15px;font-size:12.5px;color:#A9D982;font-family:'Liberation Mono',monospace;font-style:italic;transform:scaleX(0.9332);transform-origin:0 0;">'E:/Python/Sleep_Apena/3/</span>
<span class="t" style="left:1108.60px;top:550.93px;font-size:12.5px;color:#A9D982;font-family:'Liberation Mono',monospace;font-style:italic;transform:scaleX(0.9332);transform-origin:0 0;">EEG_sleep_apnea_classification.py'</span>
<span class="t" style="left:1346.60px;top:550.93px;font-size:12.5px;color:#F0F0F0;font-family:'Liberation Mono',monospace;transform:scaleX(0.9331);transform-origin:0 0;">, wdir=</span>
<span class="t" style="left:1395.60px;top:550.93px;font-size:12.5px;color:#A9D982;font-family:'Liberation Mono',monospace;font-style:italic;transform:scaleX(0.9328);transform-origin:0 0;">'E:/</span>
<span class="t" style="left:1108.60px;top:566.72px;font-size:12.5px;color:#A9D982;font-family:'Liberation Mono',monospace;font-style:italic;transform:scaleX(0.9331);transform-origin:0 0;">Python/Sleep_Apena/3'</span>
<span class="t" style="left:1255.60px;top:566.72px;font-size:12.5px;color:#F0F0F0;font-family:'Liberation Mono',monospace;transform:scaleX(0.9314);transform-origin:0 0;">)</span>
<span class="t" style="left:1108.60px;top:582.50px;font-size:12.5px;color:#F0F0F0;font-family:'Liberation Mono',monospace;transform:scaleX(0.9331);transform-origin:0 0;">runfile(</span>
<span class="t" style="left:1164.60px;top:582.50px;font-size:12.5px;color:#A9D982;font-family:'Liberation Mono',monospace;font-style:italic;transform:scaleX(0.9331);transform-origin:0 0;">'E:/Python/Sleep_Apena/3/Comparision-on-</span>
<span class="t" style="left:1108.60px;top:598.27px;font-size:12.5px;color:#A9D982;font-family:'Liberation Mono',monospace;font-style:italic;transform:scaleX(0.9331);transform-origin:0 0;">EEG-Dataset.py'</span>
<span class="t" style="left:1213.60px;top:598.27px;font-size:12.5px;color:#F0F0F0;font-family:'Liberation Mono',monospace;transform:scaleX(0.9331);transform-origin:0 0;">, wdir=</span>
<span class="t" style="left:1262.60px;top:598.27px;font-size:12.5px;color:#A9D982;font-family:'Liberation Mono',monospace;font-style:italic;transform:scaleX(0.9332);transform-origin:0 0;">'E:/Python/Sleep_Apena/3'</span>
<span class="t" style="left:1437.60px;top:598.27px;font-size:12.5px;color:#F0F0F0;font-family:'Liberation Mono',monospace;transform:scaleX(0.9314);transform-origin:0 0;">)</span>
<span class="t" style="left:1108.60px;top:614.05px;font-size:12.5px;color:#F0F0F0;font-family:'Liberation Mono',monospace;transform:scaleX(0.9331);transform-origin:0 0;">runfile(</span>
<span class="t" style="left:1164.60px;top:614.05px;font-size:12.5px;color:#A9D982;font-family:'Liberation Mono',monospace;font-style:italic;transform:scaleX(0.9332);transform-origin:0 0;">'D:/PYTHON/STUDENT/CPU/ensemble.py'</span>
<span class="t" style="left:1409.60px;top:614.05px;font-size:12.5px;color:#F0F0F0;font-family:'Liberation Mono',monospace;transform:scaleX(0.9314);transform-origin:0 0;">,</span>
<span class="t" style="left:1108.60px;top:629.84px;font-size:12.5px;color:#F0F0F0;font-family:'Liberation Mono',monospace;transform:scaleX(0.9329);transform-origin:0 0;">wdir=</span>
<span class="t" style="left:1143.60px;top:629.84px;font-size:12.5px;color:#A9D982;font-family:'Liberation Mono',monospace;font-style:italic;transform:scaleX(0.9332);transform-origin:0 0;">'D:/PYTHON/STUDENT/CPU'</span>
<span class="t" style="left:1304.60px;top:629.84px;font-size:12.5px;color:#F0F0F0;font-family:'Liberation Mono',monospace;transform:scaleX(0.9314);transform-origin:0 0;">)</span>
<span class="t" style="left:1108.60px;top:645.62px;font-size:12.5px;color:#F0F0F0;font-family:'Liberation Mono',monospace;transform:scaleX(0.9331);transform-origin:0 0;">runfile(</span>
<span class="t" style="left:1164.60px;top:645.62px;font-size:12.5px;color:#A9D982;font-family:'Liberation Mono',monospace;font-style:italic;transform:scaleX(0.9332);transform-origin:0 0;">'D:/PYTHON/STUDENT/CPU/2/ensemble.py'</span>
<span class="t" style="left:1423.60px;top:645.62px;font-size:12.5px;color:#F0F0F0;font-family:'Liberation Mono',monospace;transform:scaleX(0.9314);transform-origin:0 0;">,</span>
<span class="t" style="left:1108.60px;top:661.39px;font-size:12.5px;color:#F0F0F0;font-family:'Liberation Mono',monospace;transform:scaleX(0.9329);transform-origin:0 0;">wdir=</span>
<span class="t" style="left:1143.60px;top:661.39px;font-size:12.5px;color:#A9D982;font-family:'Liberation Mono',monospace;font-style:italic;transform:scaleX(0.9332);transform-origin:0 0;">'D:/PYTHON/STUDENT/CPU/2'</span>
<span class="t" style="left:1318.60px;top:661.39px;font-size:12.5px;color:#F0F0F0;font-family:'Liberation Mono',monospace;transform:scaleX(0.9314);transform-origin:0 0;">)</span>
<span class="t" style="left:1108.60px;top:677.17px;font-size:12.5px;color:#F0F0F0;font-family:'Liberation Mono',monospace;transform:scaleX(0.9331);transform-origin:0 0;">runfile(</span>
<span class="t" style="left:1164.60px;top:677.17px;font-size:12.5px;color:#A9D982;font-family:'Liberation Mono',monospace;font-style:italic;transform:scaleX(0.9332);transform-origin:0 0;">'D:/PYTHON/STUDENT/CPU/2/ensemble.py'</span>
<span class="t" style="left:1423.60px;top:677.17px;font-size:12.5px;color:#F0F0F0;font-family:'Liberation Mono',monospace;transform:scaleX(0.9314);transform-origin:0 0;">,</span>
<span class="t" style="left:1108.60px;top:692.95px;font-size:12.5px;color:#F0F0F0;font-family:'Liberation Mono',monospace;transform:scaleX(0.9329);transform-origin:0 0;">wdir=</span>
<span class="t" style="left:1143.60px;top:692.95px;font-size:12.5px;color:#A9D982;font-family:'Liberation Mono',monospace;font-style:italic;transform:scaleX(0.9332);transform-origin:0 0;">'D:/PYTHON/STUDENT/CPU/2'</span>
<span class="t" style="left:1318.60px;top:692.95px;font-size:12.5px;color:#F0F0F0;font-family:'Liberation Mono',monospace;transform:scaleX(0.9314);transform-origin:0 0;">)</span>
<span class="t" style="left:1108.60px;top:708.74px;font-size:12.5px;color:#F0F0F0;font-family:'Liberation Mono',monospace;transform:scaleX(0.9331);transform-origin:0 0;">runfile(</span>
<span class="t" style="left:1164.60px;top:708.74px;font-size:12.5px;color:#A9D982;font-family:'Liberation Mono',monospace;font-style:italic;transform:scaleX(0.9332);transform-origin:0 0;">'D:/PYTHON/STUDENT/CPU/2/ensemble.py'</span>
<span class="t" style="left:1423.60px;top:708.74px;font-size:12.5px;color:#F0F0F0;font-family:'Liberation Mono',monospace;transform:scaleX(0.9314);transform-origin:0 0;">,</span>
<span class="t" style="left:1108.60px;top:724.51px;font-size:12.5px;color:#F0F0F0;font-family:'Liberation Mono',monospace;transform:scaleX(0.9329);transform-origin:0 0;">wdir=</span>
<span class="t" style="left:1143.60px;top:724.51px;font-size:12.5px;color:#A9D982;font-family:'Liberation Mono',monospace;font-style:italic;transform:scaleX(0.9332);transform-origin:0 0;">'D:/PYTHON/STUDENT/CPU/2'</span>
<span class="t" style="left:1318.60px;top:724.51px;font-size:12.5px;color:#F0F0F0;font-family:'Liberation Mono',monospace;transform:scaleX(0.9314);transform-origin:0 0;">)</span>
<span class="t" style="left:1108.60px;top:740.29px;font-size:12.5px;color:#F0F0F0;font-family:'Liberation Mono',monospace;transform:scaleX(0.9331);transform-origin:0 0;">runfile(</span>
<span class="t" style="left:1164.60px;top:740.29px;font-size:12.5px;color:#A9D982;font-family:'Liberation Mono',monospace;font-style:italic;transform:scaleX(0.9331);transform-origin:0 0;">'D:/PYTHON/STUDENT/CPU/2/Part2/</span>
<span class="t" style="left:1108.60px;top:756.08px;font-size:12.5px;color:#A9D982;font-family:'Liberation Mono',monospace;font-style:italic;transform:scaleX(0.9331);transform-origin:0 0;">systemMonitor.py'</span>
<span class="t" style="left:1227.60px;top:756.08px;font-size:12.5px;color:#F0F0F0;font-family:'Liberation Mono',monospace;transform:scaleX(0.9331);transform-origin:0 0;">, wdir=</span>
<span class="t" style="left:1276.60px;top:756.08px;font-size:12.5px;color:#A9D982;font-family:'Liberation Mono',monospace;font-style:italic;transform:scaleX(0.9332);transform-origin:0 0;">'D:/PYTHON/STUDENT/CPU/2/</span>
<span class="t" style="left:1108.60px;top:771.86px;font-size:12.5px;color:#A9D982;font-family:'Liberation Mono',monospace;font-style:italic;transform:scaleX(0.9330);transform-origin:0 0;">Part2'</span>
<span class="t" style="left:1150.60px;top:771.86px;font-size:12.5px;color:#F0F0F0;font-family:'Liberation Mono',monospace;transform:scaleX(0.9314);transform-origin:0 0;">)</span>
<div class="a" style="left:1075px;top:788px;width:425px;height:1px;background:#56626a;"></div>
<div class="a" style="left:1256px;top:788px;width:37px;height:19.5px;background:#56656E;border-radius:0 0 3px 3px"></div>
<div class="a" style="left:1256px;top:788px;width:37px;height:2.2px;background:#1D6FB8;"></div>
<span class="t" style="left:1259.80px;top:793.82px;font-size:12px;color:#E8E8E8;font-family:'Liberation Sans',sans-serif;transform:scaleX(0.8033);transform-origin:0 0;">History</span>
<div class="a" style="left:1294.4px;top:789px;width:25.4px;height:16.2px;background:#31424A;border-radius:0 0 2px 2px"></div>
<span class="t" style="left:1297.90px;top:792.42px;font-size:12px;color:#E8E8E8;font-family:'Liberation Sans',sans-serif;transform:scaleX(0.7696);transform-origin:0 0;">Help</span>
<div class="a" style="left:0px;top:808px;width:1500px;height:19px;background:#31424A;"></div>
<svg class="a" style="left:915px;top:812px;" width="12" height="12" viewBox="0 0 12 12"><path d="M2 1.5 C0.5 3 0.5 5 2 6.5 M6 1.5 C7.5 3 7.5 5 6 6.5" stroke="#e0e0e0" stroke-width="1.2" fill="none"/><path d="M3.5 9 L5.5 11 L10.5 5.5" stroke="#e0e0e0" stroke-width="1.6" fill="none"/></svg>
<span class="t" style="left:933.00px;top:813.00px;font-size:11px;color:#DCDCDC;font-family:'Liberation Sans',sans-serif;transform:scaleX(0.8849);transform-origin:0 0;">LSP Python: ready</span>
<svg class="a" style="left:1041px;top:813px;" width="10" height="10" viewBox="0 0 10 10"><path d="M5 0.8 L9.2 3 V7.2 L5 9.2 L0.8 7.2 V3 Z M0.8 3 L5 5.2 L9.2 3 M5 5.2 V9.2" stroke="#e0e0e0" stroke-width="1.3" fill="none" stroke-linejoin="round"/></svg>
<span class="t" style="left:1058.00px;top:813.00px;font-size:11px;color:#DCDCDC;font-family:'Liberation Sans',sans-serif;transform:scaleX(0.9160);transform-origin:0 0;">conda: base (Python 3.8.5)</span>
<span class="t" style="left:1207.60px;top:813.00px;font-size:11px;color:#DCDCDC;font-family:'Liberation Sans',sans-serif;transform:scaleX(0.8911);transform-origin:0 0;">Line 4, Col 19</span>
<span class="t" style="left:1295.80px;top:813.00px;font-size:11px;color:#DCDCDC;font-family:'Liberation Sans',sans-serif;transform:scaleX(0.9048);transform-origin:0 0;">ASCII</span>
<span class="t" style="left:1349.10px;top:813.00px;font-size:11px;color:#DCDCDC;font-family:'Liberation Sans',sans-serif;transform:scaleX(0.8409);transform-origin:0 0;">LF</span>
<span class="t" style="left:1387.40px;top:813.00px;font-size:11px;color:#DCDCDC;font-family:'Liberation Sans',sans-serif;transform:scaleX(0.8544);transform-origin:0 0;">RW</span>
<span class="t" style="left:1434.90px;top:813.00px;font-size:11px;color:#DCDCDC;font-family:'Liberation Sans',sans-serif;transform:scaleX(0.9045);transform-origin:0 0;">Mem 82%</span>
<div class="a" style="left:452px;top:204px;width:596px;height:408px;background:rgba(0,0,0,0.25);"></div>
<div class="a" style="left:453px;top:205px;width:594px;height:28px;background:#FFFFFF;"></div>
<div class="a" style="left:453px;top:233px;width:594px;height:378.5px;background:#4B507E;"></div>
<svg class="a" style="left:460px;top:212.5px;" width="15" height="12" viewBox="0 0 15 12"><rect x="0.5" y="0.5" width="14" height="11" fill="#eef2f2" stroke="#a8b0b0"/><rect x="2.5" y="3" width="5" height="6.5" fill="#3f8a82"/><rect x="12" y="3" width="1.5" height="6.5" fill="#5aa0d0"/></svg>
<span class="t" style="left:480.00px;top:213.52px;font-size:12px;color:#383838;font-family:'Liberation Sans',sans-serif;transform:scaleX(0.9657);transform-origin:0 0;">System Monitor</span>
<div class="a" style="left:927px;top:218px;width:10.5px;height:1.2px;background:#222;"></div>
<svg class="a" style="left:972px;top:214px;" width="11" height="10" viewBox="0 0 11 10"><rect x="0.5" y="0.5" width="10" height="9" fill="none" stroke="#c8c8c8"/></svg>
<svg class="a" style="left:1018px;top:213.5px;" width="11.5" height="11" viewBox="0 0 11.5 11"><path d="M0.5 0.5 L11 10.5 M11 0.5 L0.5 10.5" stroke="#222" stroke-width="1.2"/></svg>
<span class="t" style="left:691.30px;top:253.51px;font-size:17px;color:#6AAEF2;font-family:'Liberation Sans',sans-serif;transform:scaleX(0.9941);transform-origin:0 0;">System Monitor</span>
<span class="t" style="left:714.00px;top:282.88px;font-size:10px;color:#6AAEF2;font-family:'Liberation Sans',sans-serif;transform:scaleX(0.9456);transform-origin:0 0;">Windows AMD64</span>
<span class="t" style="left:661.30px;top:306.18px;font-size:10px;color:#6AAEF2;font-family:'Liberation Sans',sans-serif;transform:scaleX(0.9601);transform-origin:0 0;">Intel64 Family 6 Model 140 Stepping 1, Ge</span>
<svg class="a" style="left:462.5px;top:275px;" width="200" height="200" viewBox="0 0 200 200"><circle cx="100" cy="100" r="80.5" fill="none" stroke="#4C517F" stroke-width="13"/><circle cx="100" cy="100" r="74" fill="#393E65"/><path d="M100.00 13.00 A87 87 0 0 1 128.96 17.96 L124.63 30.22 A74 74 0 0 0 100.00 26.00 Z" fill="#3D9DF6"/></svg>
<svg class="a" style="left:837.7px;top:275px;" width="200" height="200" viewBox="0 0 200 200"><circle cx="100" cy="100" r="80.5" fill="none" stroke="#4C517F" stroke-width="13"/><circle cx="100" cy="100" r="74" fill="#393E65"/><path d="M100.00 13.00 A87 87 0 1 1 22.73 60.02 L34.28 65.99 A74 74 0 1 0 100.00 26.00 Z" fill="#FF1E78"/></svg>
<span class="t" style="left:526.65px;top:334.25px;font-size:14px;color:#F2F2F2;font-family:'Liberation Sans',sans-serif;transform:scaleX(0.8670);transform-origin:0 0;"><b>CPU</b> USAGE</span>
<span class="t" style="left:900.40px;top:334.25px;font-size:14px;color:#F2F2F2;font-family:'Liberation Sans',sans-serif;transform:scaleX(0.8797);transform-origin:0 0;"><b>RAM</b> USAGE</span>
<div class="a" style="left:495.4px;top:355px;width:134.20000000000005px;height:44.60000000000002px;overflow:hidden">
<span class="t" style="left:9.1px;top:7.8px;font-size:58px;color:#62B0F8;-webkit-text-stroke:0.9px #62B0F8">5</span>
<span class="t" style="left:60.5px;top:7.8px;font-size:58px;color:#62B0F8;-webkit-text-stroke:0.9px #62B0F8">4</span>
<span class="t" style="left:96.2px;top:13.4px;font-size:35px;color:#62B0F8;-webkit-text-stroke:0.5px #62B0F8">%</span>
</div>
<div class="a" style="left:870.5px;top:355px;width:134.20000000000005px;height:44.60000000000002px;overflow:hidden">
<span class="t" style="left:2.3px;top:7.8px;font-size:58px;color:#FA55AA;-webkit-text-stroke:0.9px #FA55AA">8</span>
<span class="t" style="left:36.8px;top:7.8px;font-size:58px;color:#FA55AA;-webkit-text-stroke:0.9px #FA55AA">2</span>
<span class="t" style="left:90.0px;top:7.8px;font-size:58px;color:#FA55AA;-webkit-text-stroke:0.9px #FA55AA">6</span>
<span class="t" style="left:128.0px;top:15.9px;font-size:35px;color:#FA55AA;-webkit-text-stroke:0.5px #FA55AA">%</span>
</div>
<div class="a" style="left:711px;top:359px;width:87.4px;height:25px;background:#A9D8E6;box-shadow:0 1px 0 #2f5f6a"></div>
<span class="t" style="left:717.60px;top:366.90px;font-size:11px;color:#7D9AA8;font-family:'Liberation Sans',sans-serif;transform:scaleX(0.8532);transform-origin:0 0;">Show CPU Graph</span>
<div class="a" style="left:711px;top:391px;width:87.4px;height:24.3px;background:#FF3EA5;box-shadow:0 1px 0 #8a1a50"></div>
<span class="t" style="left:715.80px;top:398.50px;font-size:11px;color:#FBE9F3;font-family:'Liberation Sans',sans-serif;transform:scaleX(0.8775);transform-origin:0 0;">Show RAM Graph</span>
<div class="a" style="left:468.7px;top:485.6px;width:563px;height:118.7px;background:#000;"></div>
<span class="t" style="left:727.15px;top:491.55px;font-size:14px;color:#CBC6B8;font-family:'Liberation Sans',sans-serif;transform:scaleX(0.9419);transform-origin:0 0;">CPU percent</span>
<div class="a" style="left:499px;top:509px;width:1px;height:64px;background:#C8C8C8;"></div>
<div class="a" style="left:499px;top:572px;width:533px;height:1px;background:#C8C8C8;"></div>
<span class="t" style="left:482.70px;top:517.18px;font-size:10px;color:#B9B5A8;font-family:'Liberation Sans',sans-serif;transform:scaleX(1.1326);transform-origin:0 0;">20</span>
<div class="a" style="left:500px;top:522px;width:4px;height:1px;background:#C8C8C8;"></div>
<span class="t" style="left:482.70px;top:539.48px;font-size:10px;color:#B9B5A8;font-family:'Liberation Sans',sans-serif;transform:scaleX(1.1326);transform-origin:0 0;">10</span>
<div class="a" style="left:500px;top:544px;width:4px;height:1px;background:#C8C8C8;"></div>
<span class="t" style="left:489.00px;top:561.68px;font-size:10px;color:#B9B5A8;font-family:'Liberation Sans',sans-serif;transform:scaleX(1.1326);transform-origin:0 0;">0</span>
<div class="a" style="left:500px;top:566px;width:4px;height:1px;background:#C8C8C8;"></div>
<div class="a" style="left:557px;top:572px;width:1px;height:3px;background:#C8C8C8;"></div>
<span class="t" style="left:554.00px;top:574.68px;font-size:10px;color:#B9B5A8;font-family:'Liberation Sans',sans-serif;transform:scaleX(1.1326);transform-origin:0 0;">2</span>
<div class="a" style="left:633px;top:572px;width:1px;height:3px;background:#C8C8C8;"></div>
<span class="t" style="left:629.90px;top:574.68px;font-size:10px;color:#B9B5A8;font-family:'Liberation Sans',sans-serif;transform:scaleX(1.1326);transform-origin:0 0;">4</span>
<div class="a" style="left:709px;top:572px;width:1px;height:3px;background:#C8C8C8;"></div>
<span class="t" style="left:705.80px;top:574.68px;font-size:10px;color:#B9B5A8;font-family:'Liberation Sans',sans-serif;transform:scaleX(1.1326);transform-origin:0 0;">6</span>
<div class="a" style="left:785px;top:572px;width:1px;height:3px;background:#C8C8C8;"></div>
<span class="t" style="left:781.70px;top:574.68px;font-size:10px;color:#B9B5A8;font-family:'Liberation Sans',sans-serif;transform:scaleX(1.1326);transform-origin:0 0;">8</span>
<div class="a" style="left:861px;top:572px;width:1px;height:3px;background:#C8C8C8;"></div>
<span class="t" style="left:854.45px;top:574.68px;font-size:10px;color:#B9B5A8;font-family:'Liberation Sans',sans-serif;transform:scaleX(1.1326);transform-origin:0 0;">10</span>
<div class="a" style="left:937px;top:572px;width:1px;height:3px;background:#C8C8C8;"></div>
<span class="t" style="left:930.35px;top:574.68px;font-size:10px;color:#B9B5A8;font-family:'Liberation Sans',sans-serif;transform:scaleX(1.1326);transform-origin:0 0;">12</span>
<div class="a" style="left:1013px;top:572px;width:1px;height:3px;background:#C8C8C8;"></div>
<span class="t" style="left:1006.25px;top:574.68px;font-size:10px;color:#B9B5A8;font-family:'Liberation Sans',sans-serif;transform:scaleX(1.1326);transform-origin:0 0;">14</span>
<span class="t" style="left:457.40px;top:537.18px;font-size:10px;color:#B9B5A8;font-family:'Liberation Sans',sans-serif;transform:scaleX(3.6000);transform-origin:0 0;transform:rotate(-90deg);transform-origin:50% 50%;">Percent</span>
<span class="t" style="left:721.50px;top:592.98px;font-size:10px;color:#B9B5A8;font-family:'Liberation Sans',sans-serif;transform:scaleX(0.9806);transform-origin:0 0;">Time since start (s)</span>
<svg class="a" style="left:0;top:0" width="1500" height="844"><polyline points="519,565.6 557.6,530.2 595,516 633,527.8 671.6,539.6 709,531.8 746.4,539.6 783.8,535.7 821,540.8 859.3,544.7 896.7,546.7 935.2,543.2 972.2,522.3 1011.5,553.8" fill="none" stroke="#4A9BE8" stroke-width="2.4" stroke-linejoin="round" stroke-linecap="round"/></svg>
<svg class="a" style="left:744px;top:373px;" width="12" height="18" viewBox="0 0 12 18"><path d="M1 1 V14 L4 11 L6.5 16.5 L8.5 15.5 L6 10 H10 Z" fill="#fff" stroke="#000" stroke-width="1"/></svg>
<svg class="a" style="left:231px;top:200px;" width="12" height="18" viewBox="0 0 12 18"><path d="M1 1 V14 L4 11 L6.5 16.5 L8.5 15.5 L6 10 H10 Z" fill="#fff" stroke="#000" stroke-width="1"/></svg>
</body></html>
